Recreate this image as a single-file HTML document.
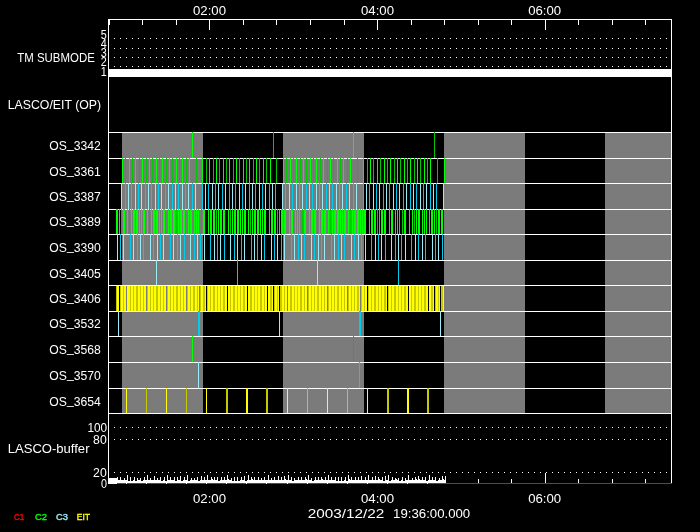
<!DOCTYPE html>
<html><head><meta charset="utf-8"><title>LASCO/EIT schedule</title>
<style>
html,body{margin:0;padding:0;background:#000;}
svg{display:block;}
text{font-family:"Liberation Sans",sans-serif;}
</style></head>
<body>
<svg width="700" height="532" viewBox="0 0 700 532" shape-rendering="crispEdges">
<rect x="0" y="0" width="700" height="532" fill="#000"/>
<rect x="122" y="132" width="81" height="281" fill="#7b7b7b"/>
<rect x="283" y="132" width="81" height="281" fill="#7b7b7b"/>
<rect x="444" y="132" width="81" height="281" fill="#7b7b7b"/>
<rect x="605" y="132" width="67" height="281" fill="#7b7b7b"/>
<rect x="108" y="132" width="564" height="1" fill="#fff"/>
<rect x="108" y="158" width="564" height="1" fill="#fff"/>
<rect x="108" y="183" width="564" height="1" fill="#fff"/>
<rect x="108" y="209" width="564" height="1" fill="#fff"/>
<rect x="108" y="234" width="564" height="1" fill="#fff"/>
<rect x="108" y="260" width="564" height="1" fill="#fff"/>
<rect x="108" y="285" width="564" height="1" fill="#fff"/>
<rect x="108" y="311" width="564" height="1" fill="#fff"/>
<rect x="108" y="336" width="564" height="1" fill="#fff"/>
<rect x="108" y="362" width="564" height="1" fill="#fff"/>
<rect x="108" y="388" width="564" height="1" fill="#fff"/>
<rect x="108" y="413" width="564" height="1" fill="#fff"/>
<rect x="114" y="38" width="1" height="1" fill="#fff"/>
<rect x="120" y="38" width="1" height="1" fill="#fff"/>
<rect x="126" y="38" width="1" height="1" fill="#fff"/>
<rect x="132" y="38" width="1" height="1" fill="#fff"/>
<rect x="138" y="38" width="1" height="1" fill="#fff"/>
<rect x="144" y="38" width="1" height="1" fill="#fff"/>
<rect x="150" y="38" width="1" height="1" fill="#fff"/>
<rect x="156" y="38" width="1" height="1" fill="#fff"/>
<rect x="162" y="38" width="1" height="1" fill="#fff"/>
<rect x="168" y="38" width="1" height="1" fill="#fff"/>
<rect x="174" y="38" width="1" height="1" fill="#fff"/>
<rect x="180" y="38" width="1" height="1" fill="#fff"/>
<rect x="186" y="38" width="1" height="1" fill="#fff"/>
<rect x="192" y="38" width="1" height="1" fill="#fff"/>
<rect x="198" y="38" width="1" height="1" fill="#fff"/>
<rect x="204" y="38" width="1" height="1" fill="#fff"/>
<rect x="210" y="38" width="1" height="1" fill="#fff"/>
<rect x="216" y="38" width="1" height="1" fill="#fff"/>
<rect x="222" y="38" width="1" height="1" fill="#fff"/>
<rect x="228" y="38" width="1" height="1" fill="#fff"/>
<rect x="234" y="38" width="1" height="1" fill="#fff"/>
<rect x="240" y="38" width="1" height="1" fill="#fff"/>
<rect x="246" y="38" width="1" height="1" fill="#fff"/>
<rect x="252" y="38" width="1" height="1" fill="#fff"/>
<rect x="258" y="38" width="1" height="1" fill="#fff"/>
<rect x="264" y="38" width="1" height="1" fill="#fff"/>
<rect x="270" y="38" width="1" height="1" fill="#fff"/>
<rect x="276" y="38" width="1" height="1" fill="#fff"/>
<rect x="282" y="38" width="1" height="1" fill="#fff"/>
<rect x="288" y="38" width="1" height="1" fill="#fff"/>
<rect x="294" y="38" width="1" height="1" fill="#fff"/>
<rect x="300" y="38" width="1" height="1" fill="#fff"/>
<rect x="306" y="38" width="1" height="1" fill="#fff"/>
<rect x="312" y="38" width="1" height="1" fill="#fff"/>
<rect x="318" y="38" width="1" height="1" fill="#fff"/>
<rect x="324" y="38" width="1" height="1" fill="#fff"/>
<rect x="330" y="38" width="1" height="1" fill="#fff"/>
<rect x="336" y="38" width="1" height="1" fill="#fff"/>
<rect x="342" y="38" width="1" height="1" fill="#fff"/>
<rect x="348" y="38" width="1" height="1" fill="#fff"/>
<rect x="354" y="38" width="1" height="1" fill="#fff"/>
<rect x="360" y="38" width="1" height="1" fill="#fff"/>
<rect x="366" y="38" width="1" height="1" fill="#fff"/>
<rect x="372" y="38" width="1" height="1" fill="#fff"/>
<rect x="378" y="38" width="1" height="1" fill="#fff"/>
<rect x="384" y="38" width="1" height="1" fill="#fff"/>
<rect x="390" y="38" width="1" height="1" fill="#fff"/>
<rect x="396" y="38" width="1" height="1" fill="#fff"/>
<rect x="402" y="38" width="1" height="1" fill="#fff"/>
<rect x="408" y="38" width="1" height="1" fill="#fff"/>
<rect x="414" y="38" width="1" height="1" fill="#fff"/>
<rect x="420" y="38" width="1" height="1" fill="#fff"/>
<rect x="426" y="38" width="1" height="1" fill="#fff"/>
<rect x="432" y="38" width="1" height="1" fill="#fff"/>
<rect x="438" y="38" width="1" height="1" fill="#fff"/>
<rect x="444" y="38" width="1" height="1" fill="#fff"/>
<rect x="450" y="38" width="1" height="1" fill="#fff"/>
<rect x="456" y="38" width="1" height="1" fill="#fff"/>
<rect x="462" y="38" width="1" height="1" fill="#fff"/>
<rect x="468" y="38" width="1" height="1" fill="#fff"/>
<rect x="474" y="38" width="1" height="1" fill="#fff"/>
<rect x="480" y="38" width="1" height="1" fill="#fff"/>
<rect x="486" y="38" width="1" height="1" fill="#fff"/>
<rect x="492" y="38" width="1" height="1" fill="#fff"/>
<rect x="498" y="38" width="1" height="1" fill="#fff"/>
<rect x="504" y="38" width="1" height="1" fill="#fff"/>
<rect x="510" y="38" width="1" height="1" fill="#fff"/>
<rect x="516" y="38" width="1" height="1" fill="#fff"/>
<rect x="522" y="38" width="1" height="1" fill="#fff"/>
<rect x="528" y="38" width="1" height="1" fill="#fff"/>
<rect x="534" y="38" width="1" height="1" fill="#fff"/>
<rect x="540" y="38" width="1" height="1" fill="#fff"/>
<rect x="546" y="38" width="1" height="1" fill="#fff"/>
<rect x="552" y="38" width="1" height="1" fill="#fff"/>
<rect x="558" y="38" width="1" height="1" fill="#fff"/>
<rect x="564" y="38" width="1" height="1" fill="#fff"/>
<rect x="570" y="38" width="1" height="1" fill="#fff"/>
<rect x="576" y="38" width="1" height="1" fill="#fff"/>
<rect x="582" y="38" width="1" height="1" fill="#fff"/>
<rect x="588" y="38" width="1" height="1" fill="#fff"/>
<rect x="594" y="38" width="1" height="1" fill="#fff"/>
<rect x="600" y="38" width="1" height="1" fill="#fff"/>
<rect x="606" y="38" width="1" height="1" fill="#fff"/>
<rect x="612" y="38" width="1" height="1" fill="#fff"/>
<rect x="618" y="38" width="1" height="1" fill="#fff"/>
<rect x="624" y="38" width="1" height="1" fill="#fff"/>
<rect x="630" y="38" width="1" height="1" fill="#fff"/>
<rect x="636" y="38" width="1" height="1" fill="#fff"/>
<rect x="642" y="38" width="1" height="1" fill="#fff"/>
<rect x="648" y="38" width="1" height="1" fill="#fff"/>
<rect x="654" y="38" width="1" height="1" fill="#fff"/>
<rect x="660" y="38" width="1" height="1" fill="#fff"/>
<rect x="666" y="38" width="1" height="1" fill="#fff"/>
<rect x="114" y="48" width="1" height="1" fill="#fff"/>
<rect x="120" y="48" width="1" height="1" fill="#fff"/>
<rect x="126" y="48" width="1" height="1" fill="#fff"/>
<rect x="132" y="48" width="1" height="1" fill="#fff"/>
<rect x="138" y="48" width="1" height="1" fill="#fff"/>
<rect x="144" y="48" width="1" height="1" fill="#fff"/>
<rect x="150" y="48" width="1" height="1" fill="#fff"/>
<rect x="156" y="48" width="1" height="1" fill="#fff"/>
<rect x="162" y="48" width="1" height="1" fill="#fff"/>
<rect x="168" y="48" width="1" height="1" fill="#fff"/>
<rect x="174" y="48" width="1" height="1" fill="#fff"/>
<rect x="180" y="48" width="1" height="1" fill="#fff"/>
<rect x="186" y="48" width="1" height="1" fill="#fff"/>
<rect x="192" y="48" width="1" height="1" fill="#fff"/>
<rect x="198" y="48" width="1" height="1" fill="#fff"/>
<rect x="204" y="48" width="1" height="1" fill="#fff"/>
<rect x="210" y="48" width="1" height="1" fill="#fff"/>
<rect x="216" y="48" width="1" height="1" fill="#fff"/>
<rect x="222" y="48" width="1" height="1" fill="#fff"/>
<rect x="228" y="48" width="1" height="1" fill="#fff"/>
<rect x="234" y="48" width="1" height="1" fill="#fff"/>
<rect x="240" y="48" width="1" height="1" fill="#fff"/>
<rect x="246" y="48" width="1" height="1" fill="#fff"/>
<rect x="252" y="48" width="1" height="1" fill="#fff"/>
<rect x="258" y="48" width="1" height="1" fill="#fff"/>
<rect x="264" y="48" width="1" height="1" fill="#fff"/>
<rect x="270" y="48" width="1" height="1" fill="#fff"/>
<rect x="276" y="48" width="1" height="1" fill="#fff"/>
<rect x="282" y="48" width="1" height="1" fill="#fff"/>
<rect x="288" y="48" width="1" height="1" fill="#fff"/>
<rect x="294" y="48" width="1" height="1" fill="#fff"/>
<rect x="300" y="48" width="1" height="1" fill="#fff"/>
<rect x="306" y="48" width="1" height="1" fill="#fff"/>
<rect x="312" y="48" width="1" height="1" fill="#fff"/>
<rect x="318" y="48" width="1" height="1" fill="#fff"/>
<rect x="324" y="48" width="1" height="1" fill="#fff"/>
<rect x="330" y="48" width="1" height="1" fill="#fff"/>
<rect x="336" y="48" width="1" height="1" fill="#fff"/>
<rect x="342" y="48" width="1" height="1" fill="#fff"/>
<rect x="348" y="48" width="1" height="1" fill="#fff"/>
<rect x="354" y="48" width="1" height="1" fill="#fff"/>
<rect x="360" y="48" width="1" height="1" fill="#fff"/>
<rect x="366" y="48" width="1" height="1" fill="#fff"/>
<rect x="372" y="48" width="1" height="1" fill="#fff"/>
<rect x="378" y="48" width="1" height="1" fill="#fff"/>
<rect x="384" y="48" width="1" height="1" fill="#fff"/>
<rect x="390" y="48" width="1" height="1" fill="#fff"/>
<rect x="396" y="48" width="1" height="1" fill="#fff"/>
<rect x="402" y="48" width="1" height="1" fill="#fff"/>
<rect x="408" y="48" width="1" height="1" fill="#fff"/>
<rect x="414" y="48" width="1" height="1" fill="#fff"/>
<rect x="420" y="48" width="1" height="1" fill="#fff"/>
<rect x="426" y="48" width="1" height="1" fill="#fff"/>
<rect x="432" y="48" width="1" height="1" fill="#fff"/>
<rect x="438" y="48" width="1" height="1" fill="#fff"/>
<rect x="444" y="48" width="1" height="1" fill="#fff"/>
<rect x="450" y="48" width="1" height="1" fill="#fff"/>
<rect x="456" y="48" width="1" height="1" fill="#fff"/>
<rect x="462" y="48" width="1" height="1" fill="#fff"/>
<rect x="468" y="48" width="1" height="1" fill="#fff"/>
<rect x="474" y="48" width="1" height="1" fill="#fff"/>
<rect x="480" y="48" width="1" height="1" fill="#fff"/>
<rect x="486" y="48" width="1" height="1" fill="#fff"/>
<rect x="492" y="48" width="1" height="1" fill="#fff"/>
<rect x="498" y="48" width="1" height="1" fill="#fff"/>
<rect x="504" y="48" width="1" height="1" fill="#fff"/>
<rect x="510" y="48" width="1" height="1" fill="#fff"/>
<rect x="516" y="48" width="1" height="1" fill="#fff"/>
<rect x="522" y="48" width="1" height="1" fill="#fff"/>
<rect x="528" y="48" width="1" height="1" fill="#fff"/>
<rect x="534" y="48" width="1" height="1" fill="#fff"/>
<rect x="540" y="48" width="1" height="1" fill="#fff"/>
<rect x="546" y="48" width="1" height="1" fill="#fff"/>
<rect x="552" y="48" width="1" height="1" fill="#fff"/>
<rect x="558" y="48" width="1" height="1" fill="#fff"/>
<rect x="564" y="48" width="1" height="1" fill="#fff"/>
<rect x="570" y="48" width="1" height="1" fill="#fff"/>
<rect x="576" y="48" width="1" height="1" fill="#fff"/>
<rect x="582" y="48" width="1" height="1" fill="#fff"/>
<rect x="588" y="48" width="1" height="1" fill="#fff"/>
<rect x="594" y="48" width="1" height="1" fill="#fff"/>
<rect x="600" y="48" width="1" height="1" fill="#fff"/>
<rect x="606" y="48" width="1" height="1" fill="#fff"/>
<rect x="612" y="48" width="1" height="1" fill="#fff"/>
<rect x="618" y="48" width="1" height="1" fill="#fff"/>
<rect x="624" y="48" width="1" height="1" fill="#fff"/>
<rect x="630" y="48" width="1" height="1" fill="#fff"/>
<rect x="636" y="48" width="1" height="1" fill="#fff"/>
<rect x="642" y="48" width="1" height="1" fill="#fff"/>
<rect x="648" y="48" width="1" height="1" fill="#fff"/>
<rect x="654" y="48" width="1" height="1" fill="#fff"/>
<rect x="660" y="48" width="1" height="1" fill="#fff"/>
<rect x="666" y="48" width="1" height="1" fill="#fff"/>
<rect x="114" y="57" width="1" height="1" fill="#fff"/>
<rect x="120" y="57" width="1" height="1" fill="#fff"/>
<rect x="126" y="57" width="1" height="1" fill="#fff"/>
<rect x="132" y="57" width="1" height="1" fill="#fff"/>
<rect x="138" y="57" width="1" height="1" fill="#fff"/>
<rect x="144" y="57" width="1" height="1" fill="#fff"/>
<rect x="150" y="57" width="1" height="1" fill="#fff"/>
<rect x="156" y="57" width="1" height="1" fill="#fff"/>
<rect x="162" y="57" width="1" height="1" fill="#fff"/>
<rect x="168" y="57" width="1" height="1" fill="#fff"/>
<rect x="174" y="57" width="1" height="1" fill="#fff"/>
<rect x="180" y="57" width="1" height="1" fill="#fff"/>
<rect x="186" y="57" width="1" height="1" fill="#fff"/>
<rect x="192" y="57" width="1" height="1" fill="#fff"/>
<rect x="198" y="57" width="1" height="1" fill="#fff"/>
<rect x="204" y="57" width="1" height="1" fill="#fff"/>
<rect x="210" y="57" width="1" height="1" fill="#fff"/>
<rect x="216" y="57" width="1" height="1" fill="#fff"/>
<rect x="222" y="57" width="1" height="1" fill="#fff"/>
<rect x="228" y="57" width="1" height="1" fill="#fff"/>
<rect x="234" y="57" width="1" height="1" fill="#fff"/>
<rect x="240" y="57" width="1" height="1" fill="#fff"/>
<rect x="246" y="57" width="1" height="1" fill="#fff"/>
<rect x="252" y="57" width="1" height="1" fill="#fff"/>
<rect x="258" y="57" width="1" height="1" fill="#fff"/>
<rect x="264" y="57" width="1" height="1" fill="#fff"/>
<rect x="270" y="57" width="1" height="1" fill="#fff"/>
<rect x="276" y="57" width="1" height="1" fill="#fff"/>
<rect x="282" y="57" width="1" height="1" fill="#fff"/>
<rect x="288" y="57" width="1" height="1" fill="#fff"/>
<rect x="294" y="57" width="1" height="1" fill="#fff"/>
<rect x="300" y="57" width="1" height="1" fill="#fff"/>
<rect x="306" y="57" width="1" height="1" fill="#fff"/>
<rect x="312" y="57" width="1" height="1" fill="#fff"/>
<rect x="318" y="57" width="1" height="1" fill="#fff"/>
<rect x="324" y="57" width="1" height="1" fill="#fff"/>
<rect x="330" y="57" width="1" height="1" fill="#fff"/>
<rect x="336" y="57" width="1" height="1" fill="#fff"/>
<rect x="342" y="57" width="1" height="1" fill="#fff"/>
<rect x="348" y="57" width="1" height="1" fill="#fff"/>
<rect x="354" y="57" width="1" height="1" fill="#fff"/>
<rect x="360" y="57" width="1" height="1" fill="#fff"/>
<rect x="366" y="57" width="1" height="1" fill="#fff"/>
<rect x="372" y="57" width="1" height="1" fill="#fff"/>
<rect x="378" y="57" width="1" height="1" fill="#fff"/>
<rect x="384" y="57" width="1" height="1" fill="#fff"/>
<rect x="390" y="57" width="1" height="1" fill="#fff"/>
<rect x="396" y="57" width="1" height="1" fill="#fff"/>
<rect x="402" y="57" width="1" height="1" fill="#fff"/>
<rect x="408" y="57" width="1" height="1" fill="#fff"/>
<rect x="414" y="57" width="1" height="1" fill="#fff"/>
<rect x="420" y="57" width="1" height="1" fill="#fff"/>
<rect x="426" y="57" width="1" height="1" fill="#fff"/>
<rect x="432" y="57" width="1" height="1" fill="#fff"/>
<rect x="438" y="57" width="1" height="1" fill="#fff"/>
<rect x="444" y="57" width="1" height="1" fill="#fff"/>
<rect x="450" y="57" width="1" height="1" fill="#fff"/>
<rect x="456" y="57" width="1" height="1" fill="#fff"/>
<rect x="462" y="57" width="1" height="1" fill="#fff"/>
<rect x="468" y="57" width="1" height="1" fill="#fff"/>
<rect x="474" y="57" width="1" height="1" fill="#fff"/>
<rect x="480" y="57" width="1" height="1" fill="#fff"/>
<rect x="486" y="57" width="1" height="1" fill="#fff"/>
<rect x="492" y="57" width="1" height="1" fill="#fff"/>
<rect x="498" y="57" width="1" height="1" fill="#fff"/>
<rect x="504" y="57" width="1" height="1" fill="#fff"/>
<rect x="510" y="57" width="1" height="1" fill="#fff"/>
<rect x="516" y="57" width="1" height="1" fill="#fff"/>
<rect x="522" y="57" width="1" height="1" fill="#fff"/>
<rect x="528" y="57" width="1" height="1" fill="#fff"/>
<rect x="534" y="57" width="1" height="1" fill="#fff"/>
<rect x="540" y="57" width="1" height="1" fill="#fff"/>
<rect x="546" y="57" width="1" height="1" fill="#fff"/>
<rect x="552" y="57" width="1" height="1" fill="#fff"/>
<rect x="558" y="57" width="1" height="1" fill="#fff"/>
<rect x="564" y="57" width="1" height="1" fill="#fff"/>
<rect x="570" y="57" width="1" height="1" fill="#fff"/>
<rect x="576" y="57" width="1" height="1" fill="#fff"/>
<rect x="582" y="57" width="1" height="1" fill="#fff"/>
<rect x="588" y="57" width="1" height="1" fill="#fff"/>
<rect x="594" y="57" width="1" height="1" fill="#fff"/>
<rect x="600" y="57" width="1" height="1" fill="#fff"/>
<rect x="606" y="57" width="1" height="1" fill="#fff"/>
<rect x="612" y="57" width="1" height="1" fill="#fff"/>
<rect x="618" y="57" width="1" height="1" fill="#fff"/>
<rect x="624" y="57" width="1" height="1" fill="#fff"/>
<rect x="630" y="57" width="1" height="1" fill="#fff"/>
<rect x="636" y="57" width="1" height="1" fill="#fff"/>
<rect x="642" y="57" width="1" height="1" fill="#fff"/>
<rect x="648" y="57" width="1" height="1" fill="#fff"/>
<rect x="654" y="57" width="1" height="1" fill="#fff"/>
<rect x="660" y="57" width="1" height="1" fill="#fff"/>
<rect x="666" y="57" width="1" height="1" fill="#fff"/>
<rect x="114" y="66" width="1" height="1" fill="#fff"/>
<rect x="120" y="66" width="1" height="1" fill="#fff"/>
<rect x="126" y="66" width="1" height="1" fill="#fff"/>
<rect x="132" y="66" width="1" height="1" fill="#fff"/>
<rect x="138" y="66" width="1" height="1" fill="#fff"/>
<rect x="144" y="66" width="1" height="1" fill="#fff"/>
<rect x="150" y="66" width="1" height="1" fill="#fff"/>
<rect x="156" y="66" width="1" height="1" fill="#fff"/>
<rect x="162" y="66" width="1" height="1" fill="#fff"/>
<rect x="168" y="66" width="1" height="1" fill="#fff"/>
<rect x="174" y="66" width="1" height="1" fill="#fff"/>
<rect x="180" y="66" width="1" height="1" fill="#fff"/>
<rect x="186" y="66" width="1" height="1" fill="#fff"/>
<rect x="192" y="66" width="1" height="1" fill="#fff"/>
<rect x="198" y="66" width="1" height="1" fill="#fff"/>
<rect x="204" y="66" width="1" height="1" fill="#fff"/>
<rect x="210" y="66" width="1" height="1" fill="#fff"/>
<rect x="216" y="66" width="1" height="1" fill="#fff"/>
<rect x="222" y="66" width="1" height="1" fill="#fff"/>
<rect x="228" y="66" width="1" height="1" fill="#fff"/>
<rect x="234" y="66" width="1" height="1" fill="#fff"/>
<rect x="240" y="66" width="1" height="1" fill="#fff"/>
<rect x="246" y="66" width="1" height="1" fill="#fff"/>
<rect x="252" y="66" width="1" height="1" fill="#fff"/>
<rect x="258" y="66" width="1" height="1" fill="#fff"/>
<rect x="264" y="66" width="1" height="1" fill="#fff"/>
<rect x="270" y="66" width="1" height="1" fill="#fff"/>
<rect x="276" y="66" width="1" height="1" fill="#fff"/>
<rect x="282" y="66" width="1" height="1" fill="#fff"/>
<rect x="288" y="66" width="1" height="1" fill="#fff"/>
<rect x="294" y="66" width="1" height="1" fill="#fff"/>
<rect x="300" y="66" width="1" height="1" fill="#fff"/>
<rect x="306" y="66" width="1" height="1" fill="#fff"/>
<rect x="312" y="66" width="1" height="1" fill="#fff"/>
<rect x="318" y="66" width="1" height="1" fill="#fff"/>
<rect x="324" y="66" width="1" height="1" fill="#fff"/>
<rect x="330" y="66" width="1" height="1" fill="#fff"/>
<rect x="336" y="66" width="1" height="1" fill="#fff"/>
<rect x="342" y="66" width="1" height="1" fill="#fff"/>
<rect x="348" y="66" width="1" height="1" fill="#fff"/>
<rect x="354" y="66" width="1" height="1" fill="#fff"/>
<rect x="360" y="66" width="1" height="1" fill="#fff"/>
<rect x="366" y="66" width="1" height="1" fill="#fff"/>
<rect x="372" y="66" width="1" height="1" fill="#fff"/>
<rect x="378" y="66" width="1" height="1" fill="#fff"/>
<rect x="384" y="66" width="1" height="1" fill="#fff"/>
<rect x="390" y="66" width="1" height="1" fill="#fff"/>
<rect x="396" y="66" width="1" height="1" fill="#fff"/>
<rect x="402" y="66" width="1" height="1" fill="#fff"/>
<rect x="408" y="66" width="1" height="1" fill="#fff"/>
<rect x="414" y="66" width="1" height="1" fill="#fff"/>
<rect x="420" y="66" width="1" height="1" fill="#fff"/>
<rect x="426" y="66" width="1" height="1" fill="#fff"/>
<rect x="432" y="66" width="1" height="1" fill="#fff"/>
<rect x="438" y="66" width="1" height="1" fill="#fff"/>
<rect x="444" y="66" width="1" height="1" fill="#fff"/>
<rect x="450" y="66" width="1" height="1" fill="#fff"/>
<rect x="456" y="66" width="1" height="1" fill="#fff"/>
<rect x="462" y="66" width="1" height="1" fill="#fff"/>
<rect x="468" y="66" width="1" height="1" fill="#fff"/>
<rect x="474" y="66" width="1" height="1" fill="#fff"/>
<rect x="480" y="66" width="1" height="1" fill="#fff"/>
<rect x="486" y="66" width="1" height="1" fill="#fff"/>
<rect x="492" y="66" width="1" height="1" fill="#fff"/>
<rect x="498" y="66" width="1" height="1" fill="#fff"/>
<rect x="504" y="66" width="1" height="1" fill="#fff"/>
<rect x="510" y="66" width="1" height="1" fill="#fff"/>
<rect x="516" y="66" width="1" height="1" fill="#fff"/>
<rect x="522" y="66" width="1" height="1" fill="#fff"/>
<rect x="528" y="66" width="1" height="1" fill="#fff"/>
<rect x="534" y="66" width="1" height="1" fill="#fff"/>
<rect x="540" y="66" width="1" height="1" fill="#fff"/>
<rect x="546" y="66" width="1" height="1" fill="#fff"/>
<rect x="552" y="66" width="1" height="1" fill="#fff"/>
<rect x="558" y="66" width="1" height="1" fill="#fff"/>
<rect x="564" y="66" width="1" height="1" fill="#fff"/>
<rect x="570" y="66" width="1" height="1" fill="#fff"/>
<rect x="576" y="66" width="1" height="1" fill="#fff"/>
<rect x="582" y="66" width="1" height="1" fill="#fff"/>
<rect x="588" y="66" width="1" height="1" fill="#fff"/>
<rect x="594" y="66" width="1" height="1" fill="#fff"/>
<rect x="600" y="66" width="1" height="1" fill="#fff"/>
<rect x="606" y="66" width="1" height="1" fill="#fff"/>
<rect x="612" y="66" width="1" height="1" fill="#fff"/>
<rect x="618" y="66" width="1" height="1" fill="#fff"/>
<rect x="624" y="66" width="1" height="1" fill="#fff"/>
<rect x="630" y="66" width="1" height="1" fill="#fff"/>
<rect x="636" y="66" width="1" height="1" fill="#fff"/>
<rect x="642" y="66" width="1" height="1" fill="#fff"/>
<rect x="648" y="66" width="1" height="1" fill="#fff"/>
<rect x="654" y="66" width="1" height="1" fill="#fff"/>
<rect x="660" y="66" width="1" height="1" fill="#fff"/>
<rect x="666" y="66" width="1" height="1" fill="#fff"/>
<rect x="114" y="427" width="1" height="1" fill="#fff"/>
<rect x="120" y="427" width="1" height="1" fill="#fff"/>
<rect x="126" y="427" width="1" height="1" fill="#fff"/>
<rect x="132" y="427" width="1" height="1" fill="#fff"/>
<rect x="138" y="427" width="1" height="1" fill="#fff"/>
<rect x="144" y="427" width="1" height="1" fill="#fff"/>
<rect x="150" y="427" width="1" height="1" fill="#fff"/>
<rect x="156" y="427" width="1" height="1" fill="#fff"/>
<rect x="162" y="427" width="1" height="1" fill="#fff"/>
<rect x="168" y="427" width="1" height="1" fill="#fff"/>
<rect x="174" y="427" width="1" height="1" fill="#fff"/>
<rect x="180" y="427" width="1" height="1" fill="#fff"/>
<rect x="186" y="427" width="1" height="1" fill="#fff"/>
<rect x="192" y="427" width="1" height="1" fill="#fff"/>
<rect x="198" y="427" width="1" height="1" fill="#fff"/>
<rect x="204" y="427" width="1" height="1" fill="#fff"/>
<rect x="210" y="427" width="1" height="1" fill="#fff"/>
<rect x="216" y="427" width="1" height="1" fill="#fff"/>
<rect x="222" y="427" width="1" height="1" fill="#fff"/>
<rect x="228" y="427" width="1" height="1" fill="#fff"/>
<rect x="234" y="427" width="1" height="1" fill="#fff"/>
<rect x="240" y="427" width="1" height="1" fill="#fff"/>
<rect x="246" y="427" width="1" height="1" fill="#fff"/>
<rect x="252" y="427" width="1" height="1" fill="#fff"/>
<rect x="258" y="427" width="1" height="1" fill="#fff"/>
<rect x="264" y="427" width="1" height="1" fill="#fff"/>
<rect x="270" y="427" width="1" height="1" fill="#fff"/>
<rect x="276" y="427" width="1" height="1" fill="#fff"/>
<rect x="282" y="427" width="1" height="1" fill="#fff"/>
<rect x="288" y="427" width="1" height="1" fill="#fff"/>
<rect x="294" y="427" width="1" height="1" fill="#fff"/>
<rect x="300" y="427" width="1" height="1" fill="#fff"/>
<rect x="306" y="427" width="1" height="1" fill="#fff"/>
<rect x="312" y="427" width="1" height="1" fill="#fff"/>
<rect x="318" y="427" width="1" height="1" fill="#fff"/>
<rect x="324" y="427" width="1" height="1" fill="#fff"/>
<rect x="330" y="427" width="1" height="1" fill="#fff"/>
<rect x="336" y="427" width="1" height="1" fill="#fff"/>
<rect x="342" y="427" width="1" height="1" fill="#fff"/>
<rect x="348" y="427" width="1" height="1" fill="#fff"/>
<rect x="354" y="427" width="1" height="1" fill="#fff"/>
<rect x="360" y="427" width="1" height="1" fill="#fff"/>
<rect x="366" y="427" width="1" height="1" fill="#fff"/>
<rect x="372" y="427" width="1" height="1" fill="#fff"/>
<rect x="378" y="427" width="1" height="1" fill="#fff"/>
<rect x="384" y="427" width="1" height="1" fill="#fff"/>
<rect x="390" y="427" width="1" height="1" fill="#fff"/>
<rect x="396" y="427" width="1" height="1" fill="#fff"/>
<rect x="402" y="427" width="1" height="1" fill="#fff"/>
<rect x="408" y="427" width="1" height="1" fill="#fff"/>
<rect x="414" y="427" width="1" height="1" fill="#fff"/>
<rect x="420" y="427" width="1" height="1" fill="#fff"/>
<rect x="426" y="427" width="1" height="1" fill="#fff"/>
<rect x="432" y="427" width="1" height="1" fill="#fff"/>
<rect x="438" y="427" width="1" height="1" fill="#fff"/>
<rect x="444" y="427" width="1" height="1" fill="#fff"/>
<rect x="450" y="427" width="1" height="1" fill="#fff"/>
<rect x="456" y="427" width="1" height="1" fill="#fff"/>
<rect x="462" y="427" width="1" height="1" fill="#fff"/>
<rect x="468" y="427" width="1" height="1" fill="#fff"/>
<rect x="474" y="427" width="1" height="1" fill="#fff"/>
<rect x="480" y="427" width="1" height="1" fill="#fff"/>
<rect x="486" y="427" width="1" height="1" fill="#fff"/>
<rect x="492" y="427" width="1" height="1" fill="#fff"/>
<rect x="498" y="427" width="1" height="1" fill="#fff"/>
<rect x="504" y="427" width="1" height="1" fill="#fff"/>
<rect x="510" y="427" width="1" height="1" fill="#fff"/>
<rect x="516" y="427" width="1" height="1" fill="#fff"/>
<rect x="522" y="427" width="1" height="1" fill="#fff"/>
<rect x="528" y="427" width="1" height="1" fill="#fff"/>
<rect x="534" y="427" width="1" height="1" fill="#fff"/>
<rect x="540" y="427" width="1" height="1" fill="#fff"/>
<rect x="546" y="427" width="1" height="1" fill="#fff"/>
<rect x="552" y="427" width="1" height="1" fill="#fff"/>
<rect x="558" y="427" width="1" height="1" fill="#fff"/>
<rect x="564" y="427" width="1" height="1" fill="#fff"/>
<rect x="570" y="427" width="1" height="1" fill="#fff"/>
<rect x="576" y="427" width="1" height="1" fill="#fff"/>
<rect x="582" y="427" width="1" height="1" fill="#fff"/>
<rect x="588" y="427" width="1" height="1" fill="#fff"/>
<rect x="594" y="427" width="1" height="1" fill="#fff"/>
<rect x="600" y="427" width="1" height="1" fill="#fff"/>
<rect x="606" y="427" width="1" height="1" fill="#fff"/>
<rect x="612" y="427" width="1" height="1" fill="#fff"/>
<rect x="618" y="427" width="1" height="1" fill="#fff"/>
<rect x="624" y="427" width="1" height="1" fill="#fff"/>
<rect x="630" y="427" width="1" height="1" fill="#fff"/>
<rect x="636" y="427" width="1" height="1" fill="#fff"/>
<rect x="642" y="427" width="1" height="1" fill="#fff"/>
<rect x="648" y="427" width="1" height="1" fill="#fff"/>
<rect x="654" y="427" width="1" height="1" fill="#fff"/>
<rect x="660" y="427" width="1" height="1" fill="#fff"/>
<rect x="666" y="427" width="1" height="1" fill="#fff"/>
<rect x="114" y="439" width="1" height="1" fill="#fff"/>
<rect x="120" y="439" width="1" height="1" fill="#fff"/>
<rect x="126" y="439" width="1" height="1" fill="#fff"/>
<rect x="132" y="439" width="1" height="1" fill="#fff"/>
<rect x="138" y="439" width="1" height="1" fill="#fff"/>
<rect x="144" y="439" width="1" height="1" fill="#fff"/>
<rect x="150" y="439" width="1" height="1" fill="#fff"/>
<rect x="156" y="439" width="1" height="1" fill="#fff"/>
<rect x="162" y="439" width="1" height="1" fill="#fff"/>
<rect x="168" y="439" width="1" height="1" fill="#fff"/>
<rect x="174" y="439" width="1" height="1" fill="#fff"/>
<rect x="180" y="439" width="1" height="1" fill="#fff"/>
<rect x="186" y="439" width="1" height="1" fill="#fff"/>
<rect x="192" y="439" width="1" height="1" fill="#fff"/>
<rect x="198" y="439" width="1" height="1" fill="#fff"/>
<rect x="204" y="439" width="1" height="1" fill="#fff"/>
<rect x="210" y="439" width="1" height="1" fill="#fff"/>
<rect x="216" y="439" width="1" height="1" fill="#fff"/>
<rect x="222" y="439" width="1" height="1" fill="#fff"/>
<rect x="228" y="439" width="1" height="1" fill="#fff"/>
<rect x="234" y="439" width="1" height="1" fill="#fff"/>
<rect x="240" y="439" width="1" height="1" fill="#fff"/>
<rect x="246" y="439" width="1" height="1" fill="#fff"/>
<rect x="252" y="439" width="1" height="1" fill="#fff"/>
<rect x="258" y="439" width="1" height="1" fill="#fff"/>
<rect x="264" y="439" width="1" height="1" fill="#fff"/>
<rect x="270" y="439" width="1" height="1" fill="#fff"/>
<rect x="276" y="439" width="1" height="1" fill="#fff"/>
<rect x="282" y="439" width="1" height="1" fill="#fff"/>
<rect x="288" y="439" width="1" height="1" fill="#fff"/>
<rect x="294" y="439" width="1" height="1" fill="#fff"/>
<rect x="300" y="439" width="1" height="1" fill="#fff"/>
<rect x="306" y="439" width="1" height="1" fill="#fff"/>
<rect x="312" y="439" width="1" height="1" fill="#fff"/>
<rect x="318" y="439" width="1" height="1" fill="#fff"/>
<rect x="324" y="439" width="1" height="1" fill="#fff"/>
<rect x="330" y="439" width="1" height="1" fill="#fff"/>
<rect x="336" y="439" width="1" height="1" fill="#fff"/>
<rect x="342" y="439" width="1" height="1" fill="#fff"/>
<rect x="348" y="439" width="1" height="1" fill="#fff"/>
<rect x="354" y="439" width="1" height="1" fill="#fff"/>
<rect x="360" y="439" width="1" height="1" fill="#fff"/>
<rect x="366" y="439" width="1" height="1" fill="#fff"/>
<rect x="372" y="439" width="1" height="1" fill="#fff"/>
<rect x="378" y="439" width="1" height="1" fill="#fff"/>
<rect x="384" y="439" width="1" height="1" fill="#fff"/>
<rect x="390" y="439" width="1" height="1" fill="#fff"/>
<rect x="396" y="439" width="1" height="1" fill="#fff"/>
<rect x="402" y="439" width="1" height="1" fill="#fff"/>
<rect x="408" y="439" width="1" height="1" fill="#fff"/>
<rect x="414" y="439" width="1" height="1" fill="#fff"/>
<rect x="420" y="439" width="1" height="1" fill="#fff"/>
<rect x="426" y="439" width="1" height="1" fill="#fff"/>
<rect x="432" y="439" width="1" height="1" fill="#fff"/>
<rect x="438" y="439" width="1" height="1" fill="#fff"/>
<rect x="444" y="439" width="1" height="1" fill="#fff"/>
<rect x="450" y="439" width="1" height="1" fill="#fff"/>
<rect x="456" y="439" width="1" height="1" fill="#fff"/>
<rect x="462" y="439" width="1" height="1" fill="#fff"/>
<rect x="468" y="439" width="1" height="1" fill="#fff"/>
<rect x="474" y="439" width="1" height="1" fill="#fff"/>
<rect x="480" y="439" width="1" height="1" fill="#fff"/>
<rect x="486" y="439" width="1" height="1" fill="#fff"/>
<rect x="492" y="439" width="1" height="1" fill="#fff"/>
<rect x="498" y="439" width="1" height="1" fill="#fff"/>
<rect x="504" y="439" width="1" height="1" fill="#fff"/>
<rect x="510" y="439" width="1" height="1" fill="#fff"/>
<rect x="516" y="439" width="1" height="1" fill="#fff"/>
<rect x="522" y="439" width="1" height="1" fill="#fff"/>
<rect x="528" y="439" width="1" height="1" fill="#fff"/>
<rect x="534" y="439" width="1" height="1" fill="#fff"/>
<rect x="540" y="439" width="1" height="1" fill="#fff"/>
<rect x="546" y="439" width="1" height="1" fill="#fff"/>
<rect x="552" y="439" width="1" height="1" fill="#fff"/>
<rect x="558" y="439" width="1" height="1" fill="#fff"/>
<rect x="564" y="439" width="1" height="1" fill="#fff"/>
<rect x="570" y="439" width="1" height="1" fill="#fff"/>
<rect x="576" y="439" width="1" height="1" fill="#fff"/>
<rect x="582" y="439" width="1" height="1" fill="#fff"/>
<rect x="588" y="439" width="1" height="1" fill="#fff"/>
<rect x="594" y="439" width="1" height="1" fill="#fff"/>
<rect x="600" y="439" width="1" height="1" fill="#fff"/>
<rect x="606" y="439" width="1" height="1" fill="#fff"/>
<rect x="612" y="439" width="1" height="1" fill="#fff"/>
<rect x="618" y="439" width="1" height="1" fill="#fff"/>
<rect x="624" y="439" width="1" height="1" fill="#fff"/>
<rect x="630" y="439" width="1" height="1" fill="#fff"/>
<rect x="636" y="439" width="1" height="1" fill="#fff"/>
<rect x="642" y="439" width="1" height="1" fill="#fff"/>
<rect x="648" y="439" width="1" height="1" fill="#fff"/>
<rect x="654" y="439" width="1" height="1" fill="#fff"/>
<rect x="660" y="439" width="1" height="1" fill="#fff"/>
<rect x="666" y="439" width="1" height="1" fill="#fff"/>
<rect x="114" y="472" width="1" height="1" fill="#fff"/>
<rect x="120" y="472" width="1" height="1" fill="#fff"/>
<rect x="126" y="472" width="1" height="1" fill="#fff"/>
<rect x="132" y="472" width="1" height="1" fill="#fff"/>
<rect x="138" y="472" width="1" height="1" fill="#fff"/>
<rect x="144" y="472" width="1" height="1" fill="#fff"/>
<rect x="150" y="472" width="1" height="1" fill="#fff"/>
<rect x="156" y="472" width="1" height="1" fill="#fff"/>
<rect x="162" y="472" width="1" height="1" fill="#fff"/>
<rect x="168" y="472" width="1" height="1" fill="#fff"/>
<rect x="174" y="472" width="1" height="1" fill="#fff"/>
<rect x="180" y="472" width="1" height="1" fill="#fff"/>
<rect x="186" y="472" width="1" height="1" fill="#fff"/>
<rect x="192" y="472" width="1" height="1" fill="#fff"/>
<rect x="198" y="472" width="1" height="1" fill="#fff"/>
<rect x="204" y="472" width="1" height="1" fill="#fff"/>
<rect x="210" y="472" width="1" height="1" fill="#fff"/>
<rect x="216" y="472" width="1" height="1" fill="#fff"/>
<rect x="222" y="472" width="1" height="1" fill="#fff"/>
<rect x="228" y="472" width="1" height="1" fill="#fff"/>
<rect x="234" y="472" width="1" height="1" fill="#fff"/>
<rect x="240" y="472" width="1" height="1" fill="#fff"/>
<rect x="246" y="472" width="1" height="1" fill="#fff"/>
<rect x="252" y="472" width="1" height="1" fill="#fff"/>
<rect x="258" y="472" width="1" height="1" fill="#fff"/>
<rect x="264" y="472" width="1" height="1" fill="#fff"/>
<rect x="270" y="472" width="1" height="1" fill="#fff"/>
<rect x="276" y="472" width="1" height="1" fill="#fff"/>
<rect x="282" y="472" width="1" height="1" fill="#fff"/>
<rect x="288" y="472" width="1" height="1" fill="#fff"/>
<rect x="294" y="472" width="1" height="1" fill="#fff"/>
<rect x="300" y="472" width="1" height="1" fill="#fff"/>
<rect x="306" y="472" width="1" height="1" fill="#fff"/>
<rect x="312" y="472" width="1" height="1" fill="#fff"/>
<rect x="318" y="472" width="1" height="1" fill="#fff"/>
<rect x="324" y="472" width="1" height="1" fill="#fff"/>
<rect x="330" y="472" width="1" height="1" fill="#fff"/>
<rect x="336" y="472" width="1" height="1" fill="#fff"/>
<rect x="342" y="472" width="1" height="1" fill="#fff"/>
<rect x="348" y="472" width="1" height="1" fill="#fff"/>
<rect x="354" y="472" width="1" height="1" fill="#fff"/>
<rect x="360" y="472" width="1" height="1" fill="#fff"/>
<rect x="366" y="472" width="1" height="1" fill="#fff"/>
<rect x="372" y="472" width="1" height="1" fill="#fff"/>
<rect x="378" y="472" width="1" height="1" fill="#fff"/>
<rect x="384" y="472" width="1" height="1" fill="#fff"/>
<rect x="390" y="472" width="1" height="1" fill="#fff"/>
<rect x="396" y="472" width="1" height="1" fill="#fff"/>
<rect x="402" y="472" width="1" height="1" fill="#fff"/>
<rect x="408" y="472" width="1" height="1" fill="#fff"/>
<rect x="414" y="472" width="1" height="1" fill="#fff"/>
<rect x="420" y="472" width="1" height="1" fill="#fff"/>
<rect x="426" y="472" width="1" height="1" fill="#fff"/>
<rect x="432" y="472" width="1" height="1" fill="#fff"/>
<rect x="438" y="472" width="1" height="1" fill="#fff"/>
<rect x="444" y="472" width="1" height="1" fill="#fff"/>
<rect x="450" y="472" width="1" height="1" fill="#fff"/>
<rect x="456" y="472" width="1" height="1" fill="#fff"/>
<rect x="462" y="472" width="1" height="1" fill="#fff"/>
<rect x="468" y="472" width="1" height="1" fill="#fff"/>
<rect x="474" y="472" width="1" height="1" fill="#fff"/>
<rect x="480" y="472" width="1" height="1" fill="#fff"/>
<rect x="486" y="472" width="1" height="1" fill="#fff"/>
<rect x="492" y="472" width="1" height="1" fill="#fff"/>
<rect x="498" y="472" width="1" height="1" fill="#fff"/>
<rect x="504" y="472" width="1" height="1" fill="#fff"/>
<rect x="510" y="472" width="1" height="1" fill="#fff"/>
<rect x="516" y="472" width="1" height="1" fill="#fff"/>
<rect x="522" y="472" width="1" height="1" fill="#fff"/>
<rect x="528" y="472" width="1" height="1" fill="#fff"/>
<rect x="534" y="472" width="1" height="1" fill="#fff"/>
<rect x="540" y="472" width="1" height="1" fill="#fff"/>
<rect x="546" y="472" width="1" height="1" fill="#fff"/>
<rect x="552" y="472" width="1" height="1" fill="#fff"/>
<rect x="558" y="472" width="1" height="1" fill="#fff"/>
<rect x="564" y="472" width="1" height="1" fill="#fff"/>
<rect x="570" y="472" width="1" height="1" fill="#fff"/>
<rect x="576" y="472" width="1" height="1" fill="#fff"/>
<rect x="582" y="472" width="1" height="1" fill="#fff"/>
<rect x="588" y="472" width="1" height="1" fill="#fff"/>
<rect x="594" y="472" width="1" height="1" fill="#fff"/>
<rect x="600" y="472" width="1" height="1" fill="#fff"/>
<rect x="606" y="472" width="1" height="1" fill="#fff"/>
<rect x="612" y="472" width="1" height="1" fill="#fff"/>
<rect x="618" y="472" width="1" height="1" fill="#fff"/>
<rect x="624" y="472" width="1" height="1" fill="#fff"/>
<rect x="630" y="472" width="1" height="1" fill="#fff"/>
<rect x="636" y="472" width="1" height="1" fill="#fff"/>
<rect x="642" y="472" width="1" height="1" fill="#fff"/>
<rect x="648" y="472" width="1" height="1" fill="#fff"/>
<rect x="654" y="472" width="1" height="1" fill="#fff"/>
<rect x="660" y="472" width="1" height="1" fill="#fff"/>
<rect x="666" y="472" width="1" height="1" fill="#fff"/>
<rect x="108" y="69" width="564" height="8" fill="#fff"/>
<rect x="192" y="132" width="1" height="26" fill="#00ff00"/>
<rect x="273" y="132" width="1" height="26" fill="#00c800"/>
<rect x="353" y="132" width="1" height="26" fill="#00ff00"/>
<rect x="434" y="132" width="1" height="26" fill="#00c800"/>
<rect x="122" y="158" width="1" height="25" fill="#00ff00"/>
<rect x="125" y="158" width="1" height="25" fill="#00c800"/>
<rect x="129" y="158" width="1" height="25" fill="#00ff00"/>
<rect x="132" y="158" width="1" height="25" fill="#00c800"/>
<rect x="135" y="158" width="1" height="25" fill="#00ff00"/>
<rect x="139" y="158" width="1" height="25" fill="#00c800"/>
<rect x="142" y="158" width="1" height="25" fill="#00ff00"/>
<rect x="146" y="158" width="1" height="25" fill="#00c800"/>
<rect x="149" y="158" width="1" height="25" fill="#00ff00"/>
<rect x="152" y="158" width="1" height="25" fill="#00c800"/>
<rect x="156" y="158" width="1" height="25" fill="#00ff00"/>
<rect x="159" y="158" width="1" height="25" fill="#00c800"/>
<rect x="162" y="158" width="1" height="25" fill="#00ff00"/>
<rect x="166" y="158" width="1" height="25" fill="#00c800"/>
<rect x="169" y="158" width="1" height="25" fill="#00ff00"/>
<rect x="172" y="158" width="1" height="25" fill="#00c800"/>
<rect x="176" y="158" width="1" height="25" fill="#00ff00"/>
<rect x="179" y="158" width="1" height="25" fill="#00c800"/>
<rect x="182" y="158" width="1" height="25" fill="#00ff00"/>
<rect x="186" y="158" width="1" height="25" fill="#00c800"/>
<rect x="189" y="158" width="1" height="25" fill="#00ff00"/>
<rect x="196" y="158" width="1" height="25" fill="#00c800"/>
<rect x="202" y="158" width="1" height="25" fill="#00ff00"/>
<rect x="206" y="158" width="1" height="25" fill="#00c800"/>
<rect x="209" y="158" width="1" height="25" fill="#00ff00"/>
<rect x="213" y="158" width="1" height="25" fill="#00c800"/>
<rect x="216" y="158" width="1" height="25" fill="#00ff00"/>
<rect x="219" y="158" width="1" height="25" fill="#00c800"/>
<rect x="223" y="158" width="1" height="25" fill="#00ff00"/>
<rect x="226" y="158" width="1" height="25" fill="#00c800"/>
<rect x="229" y="158" width="1" height="25" fill="#00ff00"/>
<rect x="233" y="158" width="1" height="25" fill="#00c800"/>
<rect x="236" y="158" width="1" height="25" fill="#00ff00"/>
<rect x="239" y="158" width="1" height="25" fill="#00c800"/>
<rect x="243" y="158" width="1" height="25" fill="#00ff00"/>
<rect x="246" y="158" width="1" height="25" fill="#00c800"/>
<rect x="249" y="158" width="1" height="25" fill="#00ff00"/>
<rect x="253" y="158" width="1" height="25" fill="#00c800"/>
<rect x="256" y="158" width="1" height="25" fill="#00ff00"/>
<rect x="259" y="158" width="1" height="25" fill="#00c800"/>
<rect x="263" y="158" width="1" height="25" fill="#00ff00"/>
<rect x="266" y="158" width="1" height="25" fill="#00c800"/>
<rect x="270" y="158" width="1" height="25" fill="#00ff00"/>
<rect x="276" y="158" width="1" height="25" fill="#00c800"/>
<rect x="283" y="158" width="1" height="25" fill="#00ff00"/>
<rect x="286" y="158" width="1" height="25" fill="#00c800"/>
<rect x="290" y="158" width="1" height="25" fill="#00ff00"/>
<rect x="293" y="158" width="1" height="25" fill="#00c800"/>
<rect x="296" y="158" width="1" height="25" fill="#00ff00"/>
<rect x="300" y="158" width="1" height="25" fill="#00c800"/>
<rect x="303" y="158" width="1" height="25" fill="#00ff00"/>
<rect x="306" y="158" width="1" height="25" fill="#00c800"/>
<rect x="310" y="158" width="1" height="25" fill="#00ff00"/>
<rect x="313" y="158" width="1" height="25" fill="#00c800"/>
<rect x="316" y="158" width="1" height="25" fill="#00ff00"/>
<rect x="320" y="158" width="1" height="25" fill="#00c800"/>
<rect x="323" y="158" width="1" height="25" fill="#00ff00"/>
<rect x="327" y="158" width="1" height="25" fill="#00c800"/>
<rect x="330" y="158" width="1" height="25" fill="#00ff00"/>
<rect x="333" y="158" width="1" height="25" fill="#00c800"/>
<rect x="337" y="158" width="1" height="25" fill="#00ff00"/>
<rect x="340" y="158" width="1" height="25" fill="#00c800"/>
<rect x="343" y="158" width="1" height="25" fill="#00ff00"/>
<rect x="347" y="158" width="1" height="25" fill="#00c800"/>
<rect x="350" y="158" width="1" height="25" fill="#00ff00"/>
<rect x="357" y="158" width="1" height="25" fill="#00c800"/>
<rect x="363" y="158" width="1" height="25" fill="#00ff00"/>
<rect x="367" y="158" width="1" height="25" fill="#00c800"/>
<rect x="370" y="158" width="1" height="25" fill="#00ff00"/>
<rect x="373" y="158" width="1" height="25" fill="#00c800"/>
<rect x="377" y="158" width="1" height="25" fill="#00ff00"/>
<rect x="380" y="158" width="1" height="25" fill="#00c800"/>
<rect x="384" y="158" width="1" height="25" fill="#00ff00"/>
<rect x="387" y="158" width="1" height="25" fill="#00c800"/>
<rect x="390" y="158" width="1" height="25" fill="#00ff00"/>
<rect x="394" y="158" width="1" height="25" fill="#00c800"/>
<rect x="397" y="158" width="1" height="25" fill="#00ff00"/>
<rect x="400" y="158" width="1" height="25" fill="#00c800"/>
<rect x="404" y="158" width="1" height="25" fill="#00ff00"/>
<rect x="407" y="158" width="1" height="25" fill="#00c800"/>
<rect x="410" y="158" width="1" height="25" fill="#00ff00"/>
<rect x="414" y="158" width="1" height="25" fill="#00c800"/>
<rect x="417" y="158" width="1" height="25" fill="#00ff00"/>
<rect x="420" y="158" width="1" height="25" fill="#00c800"/>
<rect x="424" y="158" width="1" height="25" fill="#00ff00"/>
<rect x="427" y="158" width="1" height="25" fill="#00c800"/>
<rect x="430" y="158" width="1" height="25" fill="#00ff00"/>
<rect x="437" y="158" width="1" height="25" fill="#00c800"/>
<rect x="444" y="158" width="1" height="25" fill="#00ff00"/>
<rect x="121" y="183" width="1" height="26" fill="#99eef5"/>
<rect x="125" y="183" width="1" height="26" fill="#00ccee"/>
<rect x="128" y="183" width="1" height="26" fill="#99eef5"/>
<rect x="131" y="183" width="1" height="26" fill="#00ccee"/>
<rect x="135" y="183" width="1" height="26" fill="#99eef5"/>
<rect x="138" y="183" width="1" height="26" fill="#00ccee"/>
<rect x="141" y="183" width="1" height="26" fill="#99eef5"/>
<rect x="145" y="183" width="1" height="26" fill="#00ccee"/>
<rect x="148" y="183" width="1" height="26" fill="#99eef5"/>
<rect x="151" y="183" width="1" height="26" fill="#00ccee"/>
<rect x="155" y="183" width="1" height="26" fill="#99eef5"/>
<rect x="158" y="183" width="1" height="26" fill="#00ccee"/>
<rect x="161" y="183" width="1" height="26" fill="#99eef5"/>
<rect x="165" y="183" width="1" height="26" fill="#00ccee"/>
<rect x="168" y="183" width="1" height="26" fill="#99eef5"/>
<rect x="172" y="183" width="1" height="26" fill="#00ccee"/>
<rect x="175" y="183" width="1" height="26" fill="#99eef5"/>
<rect x="178" y="183" width="1" height="26" fill="#00ccee"/>
<rect x="182" y="183" width="1" height="26" fill="#99eef5"/>
<rect x="185" y="183" width="1" height="26" fill="#00ccee"/>
<rect x="188" y="183" width="1" height="26" fill="#99eef5"/>
<rect x="192" y="183" width="1" height="26" fill="#00ccee"/>
<rect x="195" y="183" width="1" height="26" fill="#99eef5"/>
<rect x="202" y="183" width="1" height="26" fill="#00ccee"/>
<rect x="205" y="183" width="1" height="26" fill="#99eef5"/>
<rect x="208" y="183" width="1" height="26" fill="#00ccee"/>
<rect x="212" y="183" width="1" height="26" fill="#99eef5"/>
<rect x="215" y="183" width="1" height="26" fill="#00ccee"/>
<rect x="218" y="183" width="1" height="26" fill="#99eef5"/>
<rect x="222" y="183" width="1" height="26" fill="#00ccee"/>
<rect x="225" y="183" width="1" height="26" fill="#99eef5"/>
<rect x="229" y="183" width="1" height="26" fill="#00ccee"/>
<rect x="232" y="183" width="1" height="26" fill="#99eef5"/>
<rect x="235" y="183" width="1" height="26" fill="#00ccee"/>
<rect x="239" y="183" width="1" height="26" fill="#99eef5"/>
<rect x="242" y="183" width="1" height="26" fill="#00ccee"/>
<rect x="245" y="183" width="1" height="26" fill="#99eef5"/>
<rect x="249" y="183" width="1" height="26" fill="#00ccee"/>
<rect x="252" y="183" width="1" height="26" fill="#99eef5"/>
<rect x="255" y="183" width="1" height="26" fill="#00ccee"/>
<rect x="259" y="183" width="1" height="26" fill="#99eef5"/>
<rect x="262" y="183" width="1" height="26" fill="#00ccee"/>
<rect x="265" y="183" width="1" height="26" fill="#99eef5"/>
<rect x="269" y="183" width="1" height="26" fill="#00ccee"/>
<rect x="272" y="183" width="1" height="26" fill="#99eef5"/>
<rect x="275" y="183" width="1" height="26" fill="#00ccee"/>
<rect x="282" y="183" width="1" height="26" fill="#99eef5"/>
<rect x="285" y="183" width="1" height="26" fill="#00ccee"/>
<rect x="289" y="183" width="1" height="26" fill="#99eef5"/>
<rect x="292" y="183" width="1" height="26" fill="#00ccee"/>
<rect x="296" y="183" width="1" height="26" fill="#99eef5"/>
<rect x="299" y="183" width="1" height="26" fill="#00ccee"/>
<rect x="302" y="183" width="1" height="26" fill="#99eef5"/>
<rect x="306" y="183" width="1" height="26" fill="#00ccee"/>
<rect x="309" y="183" width="1" height="26" fill="#99eef5"/>
<rect x="312" y="183" width="1" height="26" fill="#00ccee"/>
<rect x="316" y="183" width="1" height="26" fill="#99eef5"/>
<rect x="319" y="183" width="1" height="26" fill="#00ccee"/>
<rect x="322" y="183" width="1" height="26" fill="#99eef5"/>
<rect x="326" y="183" width="1" height="26" fill="#00ccee"/>
<rect x="329" y="183" width="1" height="26" fill="#99eef5"/>
<rect x="332" y="183" width="1" height="26" fill="#00ccee"/>
<rect x="336" y="183" width="1" height="26" fill="#99eef5"/>
<rect x="339" y="183" width="1" height="26" fill="#00ccee"/>
<rect x="342" y="183" width="1" height="26" fill="#99eef5"/>
<rect x="346" y="183" width="1" height="26" fill="#00ccee"/>
<rect x="349" y="183" width="1" height="26" fill="#99eef5"/>
<rect x="353" y="183" width="1" height="26" fill="#00ccee"/>
<rect x="356" y="183" width="1" height="26" fill="#99eef5"/>
<rect x="363" y="183" width="1" height="26" fill="#00ccee"/>
<rect x="366" y="183" width="1" height="26" fill="#99eef5"/>
<rect x="369" y="183" width="1" height="26" fill="#00ccee"/>
<rect x="373" y="183" width="1" height="26" fill="#99eef5"/>
<rect x="376" y="183" width="1" height="26" fill="#00ccee"/>
<rect x="379" y="183" width="1" height="26" fill="#99eef5"/>
<rect x="383" y="183" width="1" height="26" fill="#00ccee"/>
<rect x="386" y="183" width="1" height="26" fill="#99eef5"/>
<rect x="389" y="183" width="1" height="26" fill="#00ccee"/>
<rect x="393" y="183" width="1" height="26" fill="#99eef5"/>
<rect x="396" y="183" width="1" height="26" fill="#00ccee"/>
<rect x="399" y="183" width="1" height="26" fill="#99eef5"/>
<rect x="403" y="183" width="1" height="26" fill="#00ccee"/>
<rect x="406" y="183" width="1" height="26" fill="#99eef5"/>
<rect x="410" y="183" width="1" height="26" fill="#00ccee"/>
<rect x="413" y="183" width="1" height="26" fill="#99eef5"/>
<rect x="416" y="183" width="1" height="26" fill="#00ccee"/>
<rect x="420" y="183" width="1" height="26" fill="#99eef5"/>
<rect x="423" y="183" width="1" height="26" fill="#00ccee"/>
<rect x="426" y="183" width="1" height="26" fill="#99eef5"/>
<rect x="430" y="183" width="1" height="26" fill="#00ccee"/>
<rect x="433" y="183" width="1" height="26" fill="#99eef5"/>
<rect x="436" y="183" width="1" height="26" fill="#00ccee"/>
<rect x="443" y="183" width="1" height="26" fill="#99eef5"/>
<rect x="116" y="209" width="2" height="25" fill="#00ff00"/>
<rect x="119" y="209" width="1" height="25" fill="#00ff00"/>
<rect x="121" y="209" width="1" height="25" fill="#00c800"/>
<rect x="123" y="209" width="2" height="25" fill="#00ff00"/>
<rect x="127" y="209" width="1" height="25" fill="#00ff00"/>
<rect x="129" y="209" width="1" height="25" fill="#00c800"/>
<rect x="131" y="209" width="1" height="25" fill="#00ff00"/>
<rect x="133" y="209" width="2" height="25" fill="#00ff00"/>
<rect x="136" y="209" width="2" height="25" fill="#00ff00"/>
<rect x="139" y="209" width="1" height="25" fill="#00ff00"/>
<rect x="141" y="209" width="1" height="25" fill="#00ff00"/>
<rect x="143" y="209" width="2" height="25" fill="#00ff00"/>
<rect x="147" y="209" width="1" height="25" fill="#00ff00"/>
<rect x="149" y="209" width="1" height="25" fill="#00c800"/>
<rect x="151" y="209" width="1" height="25" fill="#00ff00"/>
<rect x="153" y="209" width="2" height="25" fill="#00ff00"/>
<rect x="156" y="209" width="2" height="25" fill="#00ff00"/>
<rect x="159" y="209" width="1" height="25" fill="#00ff00"/>
<rect x="161" y="209" width="1" height="25" fill="#00ff00"/>
<rect x="163" y="209" width="2" height="25" fill="#00ff00"/>
<rect x="168" y="209" width="1" height="25" fill="#00ff00"/>
<rect x="170" y="209" width="2" height="25" fill="#00ff00"/>
<rect x="173" y="209" width="2" height="25" fill="#00ff00"/>
<rect x="176" y="209" width="1" height="25" fill="#00c800"/>
<rect x="178" y="209" width="1" height="25" fill="#00ff00"/>
<rect x="180" y="209" width="2" height="25" fill="#00ff00"/>
<rect x="183" y="209" width="2" height="25" fill="#00ff00"/>
<rect x="188" y="209" width="1" height="25" fill="#00ff00"/>
<rect x="190" y="209" width="2" height="25" fill="#00ff00"/>
<rect x="194" y="209" width="1" height="25" fill="#00ff00"/>
<rect x="196" y="209" width="1" height="25" fill="#00ff00"/>
<rect x="198" y="209" width="1" height="25" fill="#00ff00"/>
<rect x="201" y="209" width="1" height="25" fill="#00c800"/>
<rect x="203" y="209" width="2" height="25" fill="#00ff00"/>
<rect x="208" y="209" width="1" height="25" fill="#00ff00"/>
<rect x="210" y="209" width="2" height="25" fill="#00ff00"/>
<rect x="213" y="209" width="2" height="25" fill="#00ff00"/>
<rect x="216" y="209" width="1" height="25" fill="#00c800"/>
<rect x="218" y="209" width="1" height="25" fill="#00ff00"/>
<rect x="220" y="209" width="2" height="25" fill="#00ff00"/>
<rect x="223" y="209" width="2" height="25" fill="#00ff00"/>
<rect x="228" y="209" width="1" height="25" fill="#00ff00"/>
<rect x="230" y="209" width="1" height="25" fill="#00c800"/>
<rect x="232" y="209" width="1" height="25" fill="#00ff00"/>
<rect x="234" y="209" width="2" height="25" fill="#00ff00"/>
<rect x="237" y="209" width="2" height="25" fill="#00ff00"/>
<rect x="240" y="209" width="1" height="25" fill="#00ff00"/>
<rect x="242" y="209" width="1" height="25" fill="#00ff00"/>
<rect x="244" y="209" width="2" height="25" fill="#00ff00"/>
<rect x="248" y="209" width="1" height="25" fill="#00ff00"/>
<rect x="250" y="209" width="1" height="25" fill="#00c800"/>
<rect x="252" y="209" width="1" height="25" fill="#00ff00"/>
<rect x="254" y="209" width="2" height="25" fill="#00ff00"/>
<rect x="257" y="209" width="2" height="25" fill="#00ff00"/>
<rect x="260" y="209" width="1" height="25" fill="#00ff00"/>
<rect x="262" y="209" width="1" height="25" fill="#00ff00"/>
<rect x="264" y="209" width="2" height="25" fill="#00ff00"/>
<rect x="269" y="209" width="1" height="25" fill="#00ff00"/>
<rect x="271" y="209" width="2" height="25" fill="#00ff00"/>
<rect x="274" y="209" width="2" height="25" fill="#00ff00"/>
<rect x="277" y="209" width="1" height="25" fill="#00c800"/>
<rect x="279" y="209" width="1" height="25" fill="#00ff00"/>
<rect x="281" y="209" width="2" height="25" fill="#00ff00"/>
<rect x="284" y="209" width="2" height="25" fill="#00ff00"/>
<rect x="289" y="209" width="1" height="25" fill="#00ff00"/>
<rect x="291" y="209" width="2" height="25" fill="#00ff00"/>
<rect x="295" y="209" width="1" height="25" fill="#00ff00"/>
<rect x="297" y="209" width="1" height="25" fill="#00ff00"/>
<rect x="299" y="209" width="1" height="25" fill="#00ff00"/>
<rect x="302" y="209" width="1" height="25" fill="#00c800"/>
<rect x="304" y="209" width="2" height="25" fill="#00ff00"/>
<rect x="309" y="209" width="1" height="25" fill="#00ff00"/>
<rect x="311" y="209" width="2" height="25" fill="#00ff00"/>
<rect x="314" y="209" width="2" height="25" fill="#00ff00"/>
<rect x="317" y="209" width="1" height="25" fill="#00c800"/>
<rect x="319" y="209" width="1" height="25" fill="#00ff00"/>
<rect x="321" y="209" width="2" height="25" fill="#00ff00"/>
<rect x="324" y="209" width="2" height="25" fill="#00ff00"/>
<rect x="328" y="209" width="1" height="25" fill="#00ff00"/>
<rect x="330" y="209" width="1" height="25" fill="#00c800"/>
<rect x="332" y="209" width="1" height="25" fill="#00ff00"/>
<rect x="334" y="209" width="2" height="25" fill="#00ff00"/>
<rect x="337" y="209" width="2" height="25" fill="#00ff00"/>
<rect x="340" y="209" width="1" height="25" fill="#00ff00"/>
<rect x="342" y="209" width="1" height="25" fill="#00ff00"/>
<rect x="344" y="209" width="2" height="25" fill="#00ff00"/>
<rect x="348" y="209" width="1" height="25" fill="#00ff00"/>
<rect x="350" y="209" width="1" height="25" fill="#00c800"/>
<rect x="352" y="209" width="1" height="25" fill="#00ff00"/>
<rect x="354" y="209" width="2" height="25" fill="#00ff00"/>
<rect x="357" y="209" width="2" height="25" fill="#00ff00"/>
<rect x="360" y="209" width="1" height="25" fill="#00ff00"/>
<rect x="362" y="209" width="1" height="25" fill="#00ff00"/>
<rect x="364" y="209" width="2" height="25" fill="#00ff00"/>
<rect x="369" y="209" width="1" height="25" fill="#00ff00"/>
<rect x="371" y="209" width="2" height="25" fill="#00ff00"/>
<rect x="374" y="209" width="2" height="25" fill="#00ff00"/>
<rect x="377" y="209" width="1" height="25" fill="#00c800"/>
<rect x="379" y="209" width="1" height="25" fill="#00ff00"/>
<rect x="381" y="209" width="2" height="25" fill="#00ff00"/>
<rect x="384" y="209" width="2" height="25" fill="#00ff00"/>
<rect x="389" y="209" width="1" height="25" fill="#00ff00"/>
<rect x="391" y="209" width="2" height="25" fill="#00ff00"/>
<rect x="395" y="209" width="1" height="25" fill="#00ff00"/>
<rect x="397" y="209" width="1" height="25" fill="#00ff00"/>
<rect x="399" y="209" width="1" height="25" fill="#00ff00"/>
<rect x="402" y="209" width="1" height="25" fill="#00c800"/>
<rect x="404" y="209" width="2" height="25" fill="#00ff00"/>
<rect x="409" y="209" width="1" height="25" fill="#00ff00"/>
<rect x="412" y="209" width="1" height="25" fill="#00ff00"/>
<rect x="414" y="209" width="1" height="25" fill="#00c800"/>
<rect x="416" y="209" width="1" height="25" fill="#00ff00"/>
<rect x="418" y="209" width="2" height="25" fill="#00ff00"/>
<rect x="422" y="209" width="1" height="25" fill="#00ff00"/>
<rect x="424" y="209" width="1" height="25" fill="#00ff00"/>
<rect x="426" y="209" width="1" height="25" fill="#00ff00"/>
<rect x="429" y="209" width="1" height="25" fill="#00ff00"/>
<rect x="431" y="209" width="2" height="25" fill="#00ff00"/>
<rect x="434" y="209" width="1" height="25" fill="#00ff00"/>
<rect x="436" y="209" width="1" height="25" fill="#00c800"/>
<rect x="438" y="209" width="2" height="25" fill="#00ff00"/>
<rect x="441" y="209" width="2" height="25" fill="#00ff00"/>
<rect x="117" y="234" width="1" height="26" fill="#99eef5"/>
<rect x="120" y="234" width="1" height="26" fill="#00ccee"/>
<rect x="123" y="234" width="1" height="26" fill="#99eef5"/>
<rect x="130" y="234" width="1" height="26" fill="#00ccee"/>
<rect x="133" y="234" width="1" height="26" fill="#99eef5"/>
<rect x="137" y="234" width="1" height="26" fill="#00ccee"/>
<rect x="140" y="234" width="1" height="26" fill="#99eef5"/>
<rect x="143" y="234" width="1" height="26" fill="#00ccee"/>
<rect x="150" y="234" width="1" height="26" fill="#99eef5"/>
<rect x="153" y="234" width="1" height="26" fill="#00ccee"/>
<rect x="157" y="234" width="1" height="26" fill="#99eef5"/>
<rect x="160" y="234" width="1" height="26" fill="#00ccee"/>
<rect x="163" y="234" width="1" height="26" fill="#99eef5"/>
<rect x="170" y="234" width="1" height="26" fill="#00ccee"/>
<rect x="173" y="234" width="1" height="26" fill="#99eef5"/>
<rect x="177" y="234" width="1" height="26" fill="#00ccee"/>
<rect x="180" y="234" width="1" height="26" fill="#99eef5"/>
<rect x="184" y="234" width="1" height="26" fill="#00ccee"/>
<rect x="190" y="234" width="1" height="26" fill="#99eef5"/>
<rect x="194" y="234" width="1" height="26" fill="#00ccee"/>
<rect x="197" y="234" width="1" height="26" fill="#99eef5"/>
<rect x="200" y="234" width="1" height="26" fill="#00ccee"/>
<rect x="204" y="234" width="1" height="26" fill="#99eef5"/>
<rect x="210" y="234" width="1" height="26" fill="#00ccee"/>
<rect x="214" y="234" width="1" height="26" fill="#99eef5"/>
<rect x="217" y="234" width="1" height="26" fill="#00ccee"/>
<rect x="220" y="234" width="1" height="26" fill="#99eef5"/>
<rect x="224" y="234" width="1" height="26" fill="#00ccee"/>
<rect x="230" y="234" width="1" height="26" fill="#99eef5"/>
<rect x="234" y="234" width="1" height="26" fill="#00ccee"/>
<rect x="237" y="234" width="1" height="26" fill="#99eef5"/>
<rect x="241" y="234" width="1" height="26" fill="#00ccee"/>
<rect x="244" y="234" width="1" height="26" fill="#99eef5"/>
<rect x="251" y="234" width="1" height="26" fill="#00ccee"/>
<rect x="254" y="234" width="1" height="26" fill="#99eef5"/>
<rect x="257" y="234" width="1" height="26" fill="#00ccee"/>
<rect x="261" y="234" width="1" height="26" fill="#99eef5"/>
<rect x="264" y="234" width="1" height="26" fill="#00ccee"/>
<rect x="271" y="234" width="1" height="26" fill="#99eef5"/>
<rect x="274" y="234" width="1" height="26" fill="#00ccee"/>
<rect x="277" y="234" width="1" height="26" fill="#99eef5"/>
<rect x="281" y="234" width="1" height="26" fill="#00ccee"/>
<rect x="284" y="234" width="1" height="26" fill="#99eef5"/>
<rect x="291" y="234" width="1" height="26" fill="#00ccee"/>
<rect x="294" y="234" width="1" height="26" fill="#99eef5"/>
<rect x="298" y="234" width="1" height="26" fill="#00ccee"/>
<rect x="301" y="234" width="1" height="26" fill="#99eef5"/>
<rect x="304" y="234" width="1" height="26" fill="#00ccee"/>
<rect x="311" y="234" width="1" height="26" fill="#99eef5"/>
<rect x="314" y="234" width="1" height="26" fill="#00ccee"/>
<rect x="318" y="234" width="1" height="26" fill="#99eef5"/>
<rect x="321" y="234" width="1" height="26" fill="#00ccee"/>
<rect x="324" y="234" width="1" height="26" fill="#99eef5"/>
<rect x="331" y="234" width="1" height="26" fill="#00ccee"/>
<rect x="334" y="234" width="1" height="26" fill="#99eef5"/>
<rect x="338" y="234" width="1" height="26" fill="#00ccee"/>
<rect x="341" y="234" width="1" height="26" fill="#99eef5"/>
<rect x="344" y="234" width="1" height="26" fill="#00ccee"/>
<rect x="351" y="234" width="1" height="26" fill="#99eef5"/>
<rect x="354" y="234" width="1" height="26" fill="#00ccee"/>
<rect x="358" y="234" width="1" height="26" fill="#99eef5"/>
<rect x="361" y="234" width="1" height="26" fill="#00ccee"/>
<rect x="365" y="234" width="1" height="26" fill="#99eef5"/>
<rect x="371" y="234" width="1" height="26" fill="#00ccee"/>
<rect x="375" y="234" width="1" height="26" fill="#99eef5"/>
<rect x="378" y="234" width="1" height="26" fill="#00ccee"/>
<rect x="381" y="234" width="1" height="26" fill="#99eef5"/>
<rect x="385" y="234" width="1" height="26" fill="#00ccee"/>
<rect x="391" y="234" width="1" height="26" fill="#99eef5"/>
<rect x="395" y="234" width="1" height="26" fill="#00ccee"/>
<rect x="398" y="234" width="1" height="26" fill="#99eef5"/>
<rect x="401" y="234" width="1" height="26" fill="#00ccee"/>
<rect x="405" y="234" width="1" height="26" fill="#99eef5"/>
<rect x="411" y="234" width="1" height="26" fill="#00ccee"/>
<rect x="415" y="234" width="1" height="26" fill="#99eef5"/>
<rect x="418" y="234" width="1" height="26" fill="#00ccee"/>
<rect x="422" y="234" width="1" height="26" fill="#99eef5"/>
<rect x="425" y="234" width="1" height="26" fill="#00ccee"/>
<rect x="432" y="234" width="1" height="26" fill="#99eef5"/>
<rect x="435" y="234" width="1" height="26" fill="#00ccee"/>
<rect x="438" y="234" width="1" height="26" fill="#99eef5"/>
<rect x="442" y="234" width="1" height="26" fill="#00ccee"/>
<rect x="156" y="260" width="1" height="25" fill="#99eef5"/>
<rect x="237" y="260" width="1" height="25" fill="#00ccee"/>
<rect x="317" y="260" width="1" height="25" fill="#99eef5"/>
<rect x="398" y="260" width="1" height="25" fill="#00ccee"/>
<rect x="116" y="286" width="1" height="25" fill="#c8c800"/>
<rect x="117" y="286" width="1" height="25" fill="#ffff00"/>
<rect x="118" y="286" width="1" height="25" fill="#ffff00"/>
<rect x="120" y="286" width="1" height="25" fill="#c8c800"/>
<rect x="121" y="286" width="1" height="25" fill="#ffff00"/>
<rect x="122" y="286" width="1" height="25" fill="#ffff00"/>
<rect x="123" y="286" width="1" height="25" fill="#c8c800"/>
<rect x="124" y="286" width="1" height="25" fill="#ffff00"/>
<rect x="125" y="286" width="1" height="25" fill="#ffff00"/>
<rect x="127" y="286" width="1" height="25" fill="#ffff00"/>
<rect x="128" y="286" width="1" height="25" fill="#ffff00"/>
<rect x="129" y="286" width="1" height="25" fill="#ffff00"/>
<rect x="130" y="286" width="1" height="25" fill="#c8c800"/>
<rect x="131" y="286" width="1" height="25" fill="#ffff00"/>
<rect x="132" y="286" width="1" height="25" fill="#ffff00"/>
<rect x="133" y="286" width="1" height="25" fill="#c8c800"/>
<rect x="134" y="286" width="1" height="25" fill="#ffff00"/>
<rect x="135" y="286" width="1" height="25" fill="#ffff00"/>
<rect x="136" y="286" width="1" height="25" fill="#c8c800"/>
<rect x="137" y="286" width="1" height="25" fill="#c8c800"/>
<rect x="138" y="286" width="1" height="25" fill="#ffff00"/>
<rect x="139" y="286" width="1" height="25" fill="#ffff00"/>
<rect x="140" y="286" width="1" height="25" fill="#c8c800"/>
<rect x="141" y="286" width="1" height="25" fill="#ffff00"/>
<rect x="142" y="286" width="1" height="25" fill="#ffff00"/>
<rect x="143" y="286" width="1" height="25" fill="#c8c800"/>
<rect x="144" y="286" width="1" height="25" fill="#ffff00"/>
<rect x="145" y="286" width="1" height="25" fill="#ffff00"/>
<rect x="147" y="286" width="1" height="25" fill="#c8c800"/>
<rect x="148" y="286" width="1" height="25" fill="#ffff00"/>
<rect x="149" y="286" width="1" height="25" fill="#ffff00"/>
<rect x="150" y="286" width="1" height="25" fill="#c8c800"/>
<rect x="151" y="286" width="1" height="25" fill="#ffff00"/>
<rect x="152" y="286" width="1" height="25" fill="#ffff00"/>
<rect x="153" y="286" width="1" height="25" fill="#c8c800"/>
<rect x="154" y="286" width="1" height="25" fill="#ffff00"/>
<rect x="155" y="286" width="1" height="25" fill="#ffff00"/>
<rect x="156" y="286" width="1" height="25" fill="#c8c800"/>
<rect x="157" y="286" width="1" height="25" fill="#c8c800"/>
<rect x="158" y="286" width="1" height="25" fill="#ffff00"/>
<rect x="159" y="286" width="1" height="25" fill="#ffff00"/>
<rect x="160" y="286" width="1" height="25" fill="#c8c800"/>
<rect x="161" y="286" width="1" height="25" fill="#ffff00"/>
<rect x="162" y="286" width="1" height="25" fill="#ffff00"/>
<rect x="163" y="286" width="1" height="25" fill="#c8c800"/>
<rect x="164" y="286" width="1" height="25" fill="#ffff00"/>
<rect x="165" y="286" width="1" height="25" fill="#ffff00"/>
<rect x="167" y="286" width="1" height="25" fill="#c8c800"/>
<rect x="168" y="286" width="1" height="25" fill="#ffff00"/>
<rect x="169" y="286" width="1" height="25" fill="#ffff00"/>
<rect x="170" y="286" width="1" height="25" fill="#c8c800"/>
<rect x="171" y="286" width="1" height="25" fill="#ffff00"/>
<rect x="172" y="286" width="1" height="25" fill="#ffff00"/>
<rect x="173" y="286" width="1" height="25" fill="#c8c800"/>
<rect x="174" y="286" width="1" height="25" fill="#ffff00"/>
<rect x="175" y="286" width="1" height="25" fill="#ffff00"/>
<rect x="176" y="286" width="1" height="25" fill="#c8c800"/>
<rect x="177" y="286" width="1" height="25" fill="#c8c800"/>
<rect x="178" y="286" width="1" height="25" fill="#ffff00"/>
<rect x="179" y="286" width="1" height="25" fill="#ffff00"/>
<rect x="180" y="286" width="1" height="25" fill="#c8c800"/>
<rect x="181" y="286" width="1" height="25" fill="#ffff00"/>
<rect x="182" y="286" width="1" height="25" fill="#ffff00"/>
<rect x="183" y="286" width="1" height="25" fill="#c8c800"/>
<rect x="184" y="286" width="1" height="25" fill="#ffff00"/>
<rect x="185" y="286" width="1" height="25" fill="#ffff00"/>
<rect x="187" y="286" width="1" height="25" fill="#c8c800"/>
<rect x="188" y="286" width="1" height="25" fill="#ffff00"/>
<rect x="189" y="286" width="1" height="25" fill="#ffff00"/>
<rect x="190" y="286" width="1" height="25" fill="#c8c800"/>
<rect x="191" y="286" width="1" height="25" fill="#ffff00"/>
<rect x="192" y="286" width="1" height="25" fill="#ffff00"/>
<rect x="193" y="286" width="1" height="25" fill="#c8c800"/>
<rect x="194" y="286" width="1" height="25" fill="#c8c800"/>
<rect x="195" y="286" width="1" height="25" fill="#ffff00"/>
<rect x="196" y="286" width="1" height="25" fill="#ffff00"/>
<rect x="197" y="286" width="1" height="25" fill="#c8c800"/>
<rect x="198" y="286" width="1" height="25" fill="#ffff00"/>
<rect x="200" y="286" width="1" height="25" fill="#c8c800"/>
<rect x="201" y="286" width="1" height="25" fill="#ffff00"/>
<rect x="202" y="286" width="1" height="25" fill="#ffff00"/>
<rect x="203" y="286" width="1" height="25" fill="#c8c800"/>
<rect x="204" y="286" width="1" height="25" fill="#c8c800"/>
<rect x="205" y="286" width="1" height="25" fill="#ffff00"/>
<rect x="207" y="286" width="1" height="25" fill="#c8c800"/>
<rect x="208" y="286" width="1" height="25" fill="#ffff00"/>
<rect x="209" y="286" width="1" height="25" fill="#ffff00"/>
<rect x="210" y="286" width="1" height="25" fill="#c8c800"/>
<rect x="211" y="286" width="1" height="25" fill="#ffff00"/>
<rect x="212" y="286" width="1" height="25" fill="#ffff00"/>
<rect x="213" y="286" width="1" height="25" fill="#c8c800"/>
<rect x="214" y="286" width="1" height="25" fill="#c8c800"/>
<rect x="215" y="286" width="1" height="25" fill="#ffff00"/>
<rect x="216" y="286" width="1" height="25" fill="#ffff00"/>
<rect x="217" y="286" width="1" height="25" fill="#c8c800"/>
<rect x="218" y="286" width="1" height="25" fill="#ffff00"/>
<rect x="219" y="286" width="1" height="25" fill="#ffff00"/>
<rect x="220" y="286" width="1" height="25" fill="#c8c800"/>
<rect x="221" y="286" width="1" height="25" fill="#ffff00"/>
<rect x="222" y="286" width="1" height="25" fill="#ffff00"/>
<rect x="223" y="286" width="1" height="25" fill="#c8c800"/>
<rect x="224" y="286" width="1" height="25" fill="#c8c800"/>
<rect x="225" y="286" width="1" height="25" fill="#ffff00"/>
<rect x="226" y="286" width="1" height="25" fill="#ffff00"/>
<rect x="228" y="286" width="1" height="25" fill="#ffff00"/>
<rect x="229" y="286" width="1" height="25" fill="#ffff00"/>
<rect x="230" y="286" width="1" height="25" fill="#c8c800"/>
<rect x="231" y="286" width="1" height="25" fill="#ffff00"/>
<rect x="232" y="286" width="1" height="25" fill="#ffff00"/>
<rect x="233" y="286" width="1" height="25" fill="#c8c800"/>
<rect x="234" y="286" width="1" height="25" fill="#c8c800"/>
<rect x="235" y="286" width="1" height="25" fill="#ffff00"/>
<rect x="236" y="286" width="1" height="25" fill="#ffff00"/>
<rect x="237" y="286" width="1" height="25" fill="#c8c800"/>
<rect x="238" y="286" width="1" height="25" fill="#ffff00"/>
<rect x="239" y="286" width="1" height="25" fill="#ffff00"/>
<rect x="240" y="286" width="1" height="25" fill="#c8c800"/>
<rect x="241" y="286" width="1" height="25" fill="#ffff00"/>
<rect x="242" y="286" width="1" height="25" fill="#ffff00"/>
<rect x="243" y="286" width="1" height="25" fill="#c8c800"/>
<rect x="244" y="286" width="1" height="25" fill="#c8c800"/>
<rect x="245" y="286" width="1" height="25" fill="#ffff00"/>
<rect x="246" y="286" width="1" height="25" fill="#ffff00"/>
<rect x="248" y="286" width="1" height="25" fill="#ffff00"/>
<rect x="249" y="286" width="1" height="25" fill="#ffff00"/>
<rect x="250" y="286" width="1" height="25" fill="#c8c800"/>
<rect x="251" y="286" width="1" height="25" fill="#c8c800"/>
<rect x="252" y="286" width="1" height="25" fill="#ffff00"/>
<rect x="253" y="286" width="1" height="25" fill="#ffff00"/>
<rect x="254" y="286" width="1" height="25" fill="#c8c800"/>
<rect x="255" y="286" width="1" height="25" fill="#ffff00"/>
<rect x="256" y="286" width="1" height="25" fill="#ffff00"/>
<rect x="257" y="286" width="1" height="25" fill="#c8c800"/>
<rect x="258" y="286" width="1" height="25" fill="#ffff00"/>
<rect x="259" y="286" width="1" height="25" fill="#ffff00"/>
<rect x="260" y="286" width="1" height="25" fill="#c8c800"/>
<rect x="261" y="286" width="1" height="25" fill="#c8c800"/>
<rect x="262" y="286" width="1" height="25" fill="#ffff00"/>
<rect x="263" y="286" width="1" height="25" fill="#ffff00"/>
<rect x="264" y="286" width="1" height="25" fill="#c8c800"/>
<rect x="265" y="286" width="1" height="25" fill="#ffff00"/>
<rect x="266" y="286" width="1" height="25" fill="#ffff00"/>
<rect x="268" y="286" width="1" height="25" fill="#ffff00"/>
<rect x="269" y="286" width="1" height="25" fill="#ffff00"/>
<rect x="270" y="286" width="1" height="25" fill="#c8c800"/>
<rect x="271" y="286" width="1" height="25" fill="#c8c800"/>
<rect x="272" y="286" width="1" height="25" fill="#ffff00"/>
<rect x="274" y="286" width="1" height="25" fill="#c8c800"/>
<rect x="275" y="286" width="1" height="25" fill="#ffff00"/>
<rect x="276" y="286" width="1" height="25" fill="#ffff00"/>
<rect x="277" y="286" width="1" height="25" fill="#c8c800"/>
<rect x="278" y="286" width="1" height="25" fill="#ffff00"/>
<rect x="280" y="286" width="1" height="25" fill="#c8c800"/>
<rect x="281" y="286" width="1" height="25" fill="#c8c800"/>
<rect x="282" y="286" width="1" height="25" fill="#ffff00"/>
<rect x="283" y="286" width="1" height="25" fill="#ffff00"/>
<rect x="284" y="286" width="1" height="25" fill="#c8c800"/>
<rect x="285" y="286" width="1" height="25" fill="#ffff00"/>
<rect x="286" y="286" width="1" height="25" fill="#ffff00"/>
<rect x="288" y="286" width="1" height="25" fill="#ffff00"/>
<rect x="289" y="286" width="1" height="25" fill="#ffff00"/>
<rect x="290" y="286" width="1" height="25" fill="#c8c800"/>
<rect x="291" y="286" width="1" height="25" fill="#c8c800"/>
<rect x="292" y="286" width="1" height="25" fill="#ffff00"/>
<rect x="293" y="286" width="1" height="25" fill="#ffff00"/>
<rect x="294" y="286" width="1" height="25" fill="#c8c800"/>
<rect x="295" y="286" width="1" height="25" fill="#ffff00"/>
<rect x="296" y="286" width="1" height="25" fill="#ffff00"/>
<rect x="297" y="286" width="1" height="25" fill="#c8c800"/>
<rect x="298" y="286" width="1" height="25" fill="#ffff00"/>
<rect x="299" y="286" width="1" height="25" fill="#ffff00"/>
<rect x="300" y="286" width="1" height="25" fill="#c8c800"/>
<rect x="301" y="286" width="1" height="25" fill="#c8c800"/>
<rect x="302" y="286" width="1" height="25" fill="#ffff00"/>
<rect x="303" y="286" width="1" height="25" fill="#ffff00"/>
<rect x="304" y="286" width="1" height="25" fill="#c8c800"/>
<rect x="305" y="286" width="1" height="25" fill="#ffff00"/>
<rect x="306" y="286" width="1" height="25" fill="#ffff00"/>
<rect x="308" y="286" width="1" height="25" fill="#c8c800"/>
<rect x="309" y="286" width="1" height="25" fill="#ffff00"/>
<rect x="310" y="286" width="1" height="25" fill="#ffff00"/>
<rect x="311" y="286" width="1" height="25" fill="#c8c800"/>
<rect x="312" y="286" width="1" height="25" fill="#ffff00"/>
<rect x="313" y="286" width="1" height="25" fill="#ffff00"/>
<rect x="314" y="286" width="1" height="25" fill="#c8c800"/>
<rect x="315" y="286" width="1" height="25" fill="#ffff00"/>
<rect x="316" y="286" width="1" height="25" fill="#ffff00"/>
<rect x="317" y="286" width="1" height="25" fill="#c8c800"/>
<rect x="318" y="286" width="1" height="25" fill="#c8c800"/>
<rect x="319" y="286" width="1" height="25" fill="#ffff00"/>
<rect x="320" y="286" width="1" height="25" fill="#ffff00"/>
<rect x="321" y="286" width="1" height="25" fill="#c8c800"/>
<rect x="322" y="286" width="1" height="25" fill="#ffff00"/>
<rect x="323" y="286" width="1" height="25" fill="#ffff00"/>
<rect x="324" y="286" width="1" height="25" fill="#c8c800"/>
<rect x="325" y="286" width="1" height="25" fill="#ffff00"/>
<rect x="326" y="286" width="1" height="25" fill="#ffff00"/>
<rect x="328" y="286" width="1" height="25" fill="#c8c800"/>
<rect x="329" y="286" width="1" height="25" fill="#ffff00"/>
<rect x="330" y="286" width="1" height="25" fill="#ffff00"/>
<rect x="331" y="286" width="1" height="25" fill="#c8c800"/>
<rect x="332" y="286" width="1" height="25" fill="#ffff00"/>
<rect x="333" y="286" width="1" height="25" fill="#ffff00"/>
<rect x="334" y="286" width="1" height="25" fill="#c8c800"/>
<rect x="335" y="286" width="1" height="25" fill="#ffff00"/>
<rect x="336" y="286" width="1" height="25" fill="#ffff00"/>
<rect x="337" y="286" width="1" height="25" fill="#c8c800"/>
<rect x="338" y="286" width="1" height="25" fill="#c8c800"/>
<rect x="339" y="286" width="1" height="25" fill="#ffff00"/>
<rect x="340" y="286" width="1" height="25" fill="#ffff00"/>
<rect x="341" y="286" width="1" height="25" fill="#c8c800"/>
<rect x="342" y="286" width="1" height="25" fill="#ffff00"/>
<rect x="343" y="286" width="1" height="25" fill="#ffff00"/>
<rect x="344" y="286" width="1" height="25" fill="#c8c800"/>
<rect x="345" y="286" width="1" height="25" fill="#ffff00"/>
<rect x="346" y="286" width="1" height="25" fill="#ffff00"/>
<rect x="348" y="286" width="1" height="25" fill="#c8c800"/>
<rect x="349" y="286" width="1" height="25" fill="#ffff00"/>
<rect x="350" y="286" width="1" height="25" fill="#ffff00"/>
<rect x="351" y="286" width="1" height="25" fill="#c8c800"/>
<rect x="352" y="286" width="1" height="25" fill="#ffff00"/>
<rect x="353" y="286" width="1" height="25" fill="#ffff00"/>
<rect x="354" y="286" width="1" height="25" fill="#c8c800"/>
<rect x="355" y="286" width="1" height="25" fill="#ffff00"/>
<rect x="356" y="286" width="1" height="25" fill="#ffff00"/>
<rect x="357" y="286" width="1" height="25" fill="#c8c800"/>
<rect x="358" y="286" width="1" height="25" fill="#c8c800"/>
<rect x="359" y="286" width="1" height="25" fill="#ffff00"/>
<rect x="361" y="286" width="1" height="25" fill="#c8c800"/>
<rect x="362" y="286" width="1" height="25" fill="#ffff00"/>
<rect x="363" y="286" width="1" height="25" fill="#ffff00"/>
<rect x="364" y="286" width="1" height="25" fill="#c8c800"/>
<rect x="365" y="286" width="1" height="25" fill="#ffff00"/>
<rect x="366" y="286" width="1" height="25" fill="#ffff00"/>
<rect x="368" y="286" width="1" height="25" fill="#c8c800"/>
<rect x="369" y="286" width="1" height="25" fill="#ffff00"/>
<rect x="370" y="286" width="1" height="25" fill="#ffff00"/>
<rect x="371" y="286" width="1" height="25" fill="#c8c800"/>
<rect x="372" y="286" width="1" height="25" fill="#ffff00"/>
<rect x="373" y="286" width="1" height="25" fill="#ffff00"/>
<rect x="374" y="286" width="1" height="25" fill="#c8c800"/>
<rect x="375" y="286" width="1" height="25" fill="#c8c800"/>
<rect x="376" y="286" width="1" height="25" fill="#ffff00"/>
<rect x="377" y="286" width="1" height="25" fill="#ffff00"/>
<rect x="378" y="286" width="1" height="25" fill="#c8c800"/>
<rect x="379" y="286" width="1" height="25" fill="#ffff00"/>
<rect x="380" y="286" width="1" height="25" fill="#ffff00"/>
<rect x="381" y="286" width="1" height="25" fill="#c8c800"/>
<rect x="382" y="286" width="1" height="25" fill="#ffff00"/>
<rect x="383" y="286" width="1" height="25" fill="#ffff00"/>
<rect x="384" y="286" width="1" height="25" fill="#c8c800"/>
<rect x="385" y="286" width="1" height="25" fill="#c8c800"/>
<rect x="386" y="286" width="1" height="25" fill="#ffff00"/>
<rect x="388" y="286" width="1" height="25" fill="#c8c800"/>
<rect x="389" y="286" width="1" height="25" fill="#ffff00"/>
<rect x="390" y="286" width="1" height="25" fill="#ffff00"/>
<rect x="391" y="286" width="1" height="25" fill="#c8c800"/>
<rect x="392" y="286" width="1" height="25" fill="#ffff00"/>
<rect x="393" y="286" width="1" height="25" fill="#ffff00"/>
<rect x="394" y="286" width="1" height="25" fill="#c8c800"/>
<rect x="395" y="286" width="1" height="25" fill="#c8c800"/>
<rect x="396" y="286" width="1" height="25" fill="#ffff00"/>
<rect x="397" y="286" width="1" height="25" fill="#ffff00"/>
<rect x="398" y="286" width="1" height="25" fill="#c8c800"/>
<rect x="399" y="286" width="1" height="25" fill="#ffff00"/>
<rect x="400" y="286" width="1" height="25" fill="#ffff00"/>
<rect x="401" y="286" width="1" height="25" fill="#c8c800"/>
<rect x="402" y="286" width="1" height="25" fill="#ffff00"/>
<rect x="403" y="286" width="1" height="25" fill="#ffff00"/>
<rect x="404" y="286" width="1" height="25" fill="#c8c800"/>
<rect x="405" y="286" width="1" height="25" fill="#c8c800"/>
<rect x="406" y="286" width="1" height="25" fill="#ffff00"/>
<rect x="407" y="286" width="1" height="25" fill="#ffff00"/>
<rect x="409" y="286" width="1" height="25" fill="#ffff00"/>
<rect x="410" y="286" width="1" height="25" fill="#ffff00"/>
<rect x="411" y="286" width="1" height="25" fill="#c8c800"/>
<rect x="412" y="286" width="1" height="25" fill="#ffff00"/>
<rect x="413" y="286" width="1" height="25" fill="#ffff00"/>
<rect x="414" y="286" width="1" height="25" fill="#c8c800"/>
<rect x="415" y="286" width="1" height="25" fill="#c8c800"/>
<rect x="416" y="286" width="1" height="25" fill="#ffff00"/>
<rect x="417" y="286" width="1" height="25" fill="#ffff00"/>
<rect x="418" y="286" width="1" height="25" fill="#c8c800"/>
<rect x="419" y="286" width="1" height="25" fill="#ffff00"/>
<rect x="420" y="286" width="1" height="25" fill="#ffff00"/>
<rect x="421" y="286" width="1" height="25" fill="#c8c800"/>
<rect x="422" y="286" width="1" height="25" fill="#ffff00"/>
<rect x="423" y="286" width="1" height="25" fill="#ffff00"/>
<rect x="424" y="286" width="1" height="25" fill="#c8c800"/>
<rect x="425" y="286" width="1" height="25" fill="#c8c800"/>
<rect x="426" y="286" width="1" height="25" fill="#ffff00"/>
<rect x="427" y="286" width="1" height="25" fill="#ffff00"/>
<rect x="429" y="286" width="1" height="25" fill="#ffff00"/>
<rect x="430" y="286" width="1" height="25" fill="#ffff00"/>
<rect x="431" y="286" width="1" height="25" fill="#c8c800"/>
<rect x="432" y="286" width="1" height="25" fill="#c8c800"/>
<rect x="433" y="286" width="1" height="25" fill="#ffff00"/>
<rect x="435" y="286" width="1" height="25" fill="#c8c800"/>
<rect x="436" y="286" width="1" height="25" fill="#ffff00"/>
<rect x="437" y="286" width="1" height="25" fill="#ffff00"/>
<rect x="438" y="286" width="1" height="25" fill="#c8c800"/>
<rect x="439" y="286" width="1" height="25" fill="#ffff00"/>
<rect x="441" y="286" width="1" height="25" fill="#c8c800"/>
<rect x="442" y="286" width="1" height="25" fill="#c8c800"/>
<rect x="443" y="286" width="1" height="25" fill="#ffff00"/>
<rect x="118" y="311" width="1" height="25" fill="#99eef5"/>
<rect x="198" y="311" width="2" height="25" fill="#00ccee"/>
<rect x="279" y="311" width="1" height="25" fill="#99eef5"/>
<rect x="359" y="311" width="2" height="25" fill="#00ccee"/>
<rect x="440" y="311" width="1" height="25" fill="#99eef5"/>
<rect x="192" y="336" width="1" height="26" fill="#00ff00"/>
<rect x="353" y="336" width="1" height="26" fill="#00c800"/>
<rect x="198" y="362" width="1" height="26" fill="#99eef5"/>
<rect x="359" y="362" width="1" height="26" fill="#00ccee"/>
<rect x="126" y="388" width="1" height="25" fill="#ffff00"/>
<rect x="146" y="388" width="1" height="25" fill="#c8c800"/>
<rect x="166" y="388" width="1" height="25" fill="#ffff00"/>
<rect x="186" y="388" width="1" height="25" fill="#c8c800"/>
<rect x="206" y="388" width="1" height="25" fill="#ffff00"/>
<rect x="226" y="388" width="2" height="25" fill="#c8c800"/>
<rect x="246" y="388" width="2" height="25" fill="#ffff00"/>
<rect x="266" y="388" width="2" height="25" fill="#c8c800"/>
<rect x="287" y="388" width="1" height="25" fill="#ffff00"/>
<rect x="307" y="388" width="1" height="25" fill="#c8c800"/>
<rect x="327" y="388" width="1" height="25" fill="#ffff00"/>
<rect x="347" y="388" width="1" height="25" fill="#c8c800"/>
<rect x="367" y="388" width="1" height="25" fill="#ffff00"/>
<rect x="387" y="388" width="2" height="25" fill="#c8c800"/>
<rect x="407" y="388" width="2" height="25" fill="#ffff00"/>
<rect x="427" y="388" width="2" height="25" fill="#c8c800"/>
<rect x="108" y="478" width="9" height="6" fill="#fff"/>
<rect x="117" y="483" width="555" height="1" fill="#ff0000"/>
<rect x="117" y="480" width="329" height="3" fill="#fff"/>
<rect x="117" y="477" width="1" height="3" fill="#fff"/>
<rect x="120" y="477" width="1" height="3" fill="#fff"/>
<rect x="124" y="478" width="1" height="2" fill="#fff"/>
<rect x="127" y="475" width="1" height="5" fill="#fff"/>
<rect x="128" y="480" width="2" height="1" fill="#000"/>
<rect x="130" y="477" width="1" height="3" fill="#fff"/>
<rect x="131" y="480" width="2" height="1" fill="#000"/>
<rect x="134" y="477" width="1" height="3" fill="#fff"/>
<rect x="135" y="480" width="2" height="1" fill="#000"/>
<rect x="137" y="478" width="1" height="2" fill="#fff"/>
<rect x="140" y="478" width="1" height="2" fill="#fff"/>
<rect x="141" y="480" width="2" height="1" fill="#000"/>
<rect x="144" y="477" width="1" height="3" fill="#fff"/>
<rect x="147" y="475" width="1" height="5" fill="#fff"/>
<rect x="150" y="478" width="1" height="2" fill="#fff"/>
<rect x="154" y="476" width="1" height="4" fill="#fff"/>
<rect x="157" y="478" width="1" height="2" fill="#fff"/>
<rect x="160" y="477" width="1" height="3" fill="#fff"/>
<rect x="161" y="480" width="2" height="1" fill="#000"/>
<rect x="164" y="477" width="1" height="3" fill="#fff"/>
<rect x="165" y="480" width="2" height="1" fill="#000"/>
<rect x="167" y="475" width="1" height="5" fill="#fff"/>
<rect x="170" y="477" width="1" height="3" fill="#fff"/>
<rect x="174" y="477" width="1" height="3" fill="#fff"/>
<rect x="175" y="480" width="2" height="1" fill="#000"/>
<rect x="177" y="477" width="1" height="3" fill="#fff"/>
<rect x="180" y="476" width="1" height="4" fill="#fff"/>
<rect x="181" y="480" width="2" height="1" fill="#000"/>
<rect x="184" y="477" width="1" height="3" fill="#fff"/>
<rect x="187" y="475" width="1" height="5" fill="#fff"/>
<rect x="188" y="480" width="2" height="1" fill="#000"/>
<rect x="191" y="478" width="1" height="2" fill="#fff"/>
<rect x="194" y="478" width="1" height="2" fill="#fff"/>
<rect x="197" y="477" width="1" height="3" fill="#fff"/>
<rect x="198" y="480" width="2" height="1" fill="#000"/>
<rect x="201" y="476" width="1" height="4" fill="#fff"/>
<rect x="204" y="477" width="1" height="3" fill="#fff"/>
<rect x="207" y="475" width="1" height="5" fill="#fff"/>
<rect x="211" y="477" width="1" height="3" fill="#fff"/>
<rect x="212" y="479" width="1" height="1" fill="#fff"/>
<rect x="214" y="477" width="1" height="3" fill="#fff"/>
<rect x="217" y="477" width="1" height="3" fill="#fff"/>
<rect x="218" y="480" width="2" height="1" fill="#000"/>
<rect x="221" y="477" width="1" height="3" fill="#fff"/>
<rect x="224" y="477" width="1" height="3" fill="#fff"/>
<rect x="227" y="475" width="1" height="5" fill="#fff"/>
<rect x="228" y="479" width="1" height="1" fill="#fff"/>
<rect x="231" y="478" width="1" height="2" fill="#fff"/>
<rect x="232" y="480" width="2" height="1" fill="#000"/>
<rect x="234" y="477" width="1" height="3" fill="#fff"/>
<rect x="235" y="480" width="2" height="1" fill="#000"/>
<rect x="237" y="477" width="1" height="3" fill="#fff"/>
<rect x="238" y="480" width="2" height="1" fill="#000"/>
<rect x="241" y="477" width="1" height="3" fill="#fff"/>
<rect x="244" y="476" width="1" height="4" fill="#fff"/>
<rect x="245" y="480" width="2" height="1" fill="#000"/>
<rect x="248" y="475" width="1" height="5" fill="#fff"/>
<rect x="251" y="477" width="1" height="3" fill="#fff"/>
<rect x="252" y="479" width="1" height="1" fill="#fff"/>
<rect x="254" y="477" width="1" height="3" fill="#fff"/>
<rect x="258" y="477" width="1" height="3" fill="#fff"/>
<rect x="261" y="478" width="1" height="2" fill="#fff"/>
<rect x="264" y="477" width="1" height="3" fill="#fff"/>
<rect x="268" y="475" width="1" height="5" fill="#fff"/>
<rect x="271" y="478" width="1" height="2" fill="#fff"/>
<rect x="274" y="477" width="1" height="3" fill="#fff"/>
<rect x="278" y="476" width="1" height="4" fill="#fff"/>
<rect x="281" y="477" width="1" height="3" fill="#fff"/>
<rect x="284" y="476" width="1" height="4" fill="#fff"/>
<rect x="285" y="479" width="1" height="1" fill="#fff"/>
<rect x="288" y="475" width="1" height="5" fill="#fff"/>
<rect x="291" y="477" width="1" height="3" fill="#fff"/>
<rect x="292" y="480" width="2" height="1" fill="#000"/>
<rect x="294" y="478" width="1" height="2" fill="#fff"/>
<rect x="298" y="477" width="1" height="3" fill="#fff"/>
<rect x="301" y="477" width="1" height="3" fill="#fff"/>
<rect x="305" y="477" width="1" height="3" fill="#fff"/>
<rect x="306" y="479" width="1" height="1" fill="#fff"/>
<rect x="308" y="475" width="1" height="5" fill="#fff"/>
<rect x="311" y="478" width="1" height="2" fill="#fff"/>
<rect x="312" y="480" width="2" height="1" fill="#000"/>
<rect x="315" y="477" width="1" height="3" fill="#fff"/>
<rect x="318" y="477" width="1" height="3" fill="#fff"/>
<rect x="321" y="477" width="1" height="3" fill="#fff"/>
<rect x="322" y="479" width="1" height="1" fill="#fff"/>
<rect x="325" y="477" width="1" height="3" fill="#fff"/>
<rect x="328" y="475" width="1" height="5" fill="#fff"/>
<rect x="331" y="477" width="1" height="3" fill="#fff"/>
<rect x="335" y="477" width="1" height="3" fill="#fff"/>
<rect x="336" y="480" width="2" height="1" fill="#000"/>
<rect x="338" y="477" width="1" height="3" fill="#fff"/>
<rect x="339" y="480" width="2" height="1" fill="#000"/>
<rect x="341" y="477" width="1" height="3" fill="#fff"/>
<rect x="342" y="480" width="2" height="1" fill="#000"/>
<rect x="345" y="477" width="1" height="3" fill="#fff"/>
<rect x="346" y="480" width="2" height="1" fill="#000"/>
<rect x="348" y="475" width="1" height="5" fill="#fff"/>
<rect x="349" y="479" width="1" height="1" fill="#fff"/>
<rect x="351" y="477" width="1" height="3" fill="#fff"/>
<rect x="355" y="477" width="1" height="3" fill="#fff"/>
<rect x="358" y="477" width="1" height="3" fill="#fff"/>
<rect x="361" y="476" width="1" height="4" fill="#fff"/>
<rect x="365" y="477" width="1" height="3" fill="#fff"/>
<rect x="368" y="475" width="1" height="5" fill="#fff"/>
<rect x="372" y="477" width="1" height="3" fill="#fff"/>
<rect x="375" y="476" width="1" height="4" fill="#fff"/>
<rect x="378" y="477" width="1" height="3" fill="#fff"/>
<rect x="379" y="479" width="1" height="1" fill="#fff"/>
<rect x="382" y="477" width="1" height="3" fill="#fff"/>
<rect x="383" y="480" width="2" height="1" fill="#000"/>
<rect x="385" y="476" width="1" height="4" fill="#fff"/>
<rect x="388" y="475" width="1" height="5" fill="#fff"/>
<rect x="389" y="480" width="2" height="1" fill="#000"/>
<rect x="392" y="477" width="1" height="3" fill="#fff"/>
<rect x="395" y="478" width="1" height="2" fill="#fff"/>
<rect x="396" y="479" width="1" height="1" fill="#fff"/>
<rect x="398" y="478" width="1" height="2" fill="#fff"/>
<rect x="399" y="480" width="2" height="1" fill="#000"/>
<rect x="402" y="477" width="1" height="3" fill="#fff"/>
<rect x="403" y="480" width="2" height="1" fill="#000"/>
<rect x="405" y="478" width="1" height="2" fill="#fff"/>
<rect x="408" y="475" width="1" height="5" fill="#fff"/>
<rect x="412" y="478" width="1" height="2" fill="#fff"/>
<rect x="415" y="477" width="1" height="3" fill="#fff"/>
<rect x="416" y="479" width="1" height="1" fill="#fff"/>
<rect x="418" y="476" width="1" height="4" fill="#fff"/>
<rect x="419" y="479" width="1" height="1" fill="#fff"/>
<rect x="422" y="477" width="1" height="3" fill="#fff"/>
<rect x="425" y="477" width="1" height="3" fill="#fff"/>
<rect x="426" y="480" width="2" height="1" fill="#000"/>
<rect x="429" y="475" width="1" height="5" fill="#fff"/>
<rect x="432" y="477" width="1" height="3" fill="#fff"/>
<rect x="435" y="477" width="1" height="3" fill="#fff"/>
<rect x="436" y="480" width="2" height="1" fill="#000"/>
<rect x="439" y="478" width="1" height="2" fill="#fff"/>
<rect x="442" y="476" width="1" height="4" fill="#fff"/>
<rect x="443" y="479" width="1" height="1" fill="#fff"/>
<rect x="445" y="476" width="1" height="4" fill="#fff"/>
<rect x="446" y="480" width="2" height="1" fill="#000"/>
<rect x="126" y="483" width="1" height="1" fill="#fff"/>
<rect x="146" y="483" width="1" height="1" fill="#fff"/>
<rect x="166" y="483" width="1" height="1" fill="#fff"/>
<rect x="186" y="483" width="1" height="1" fill="#fff"/>
<rect x="206" y="483" width="1" height="1" fill="#fff"/>
<rect x="226" y="483" width="1" height="1" fill="#fff"/>
<rect x="246" y="483" width="1" height="1" fill="#fff"/>
<rect x="266" y="483" width="1" height="1" fill="#fff"/>
<rect x="287" y="483" width="1" height="1" fill="#fff"/>
<rect x="307" y="483" width="1" height="1" fill="#fff"/>
<rect x="327" y="483" width="1" height="1" fill="#fff"/>
<rect x="347" y="483" width="1" height="1" fill="#fff"/>
<rect x="367" y="483" width="1" height="1" fill="#fff"/>
<rect x="387" y="483" width="1" height="1" fill="#fff"/>
<rect x="407" y="483" width="1" height="1" fill="#fff"/>
<rect x="427" y="483" width="1" height="1" fill="#fff"/>
<rect x="108" y="19" width="1" height="465" fill="#fff"/>
<rect x="671" y="19" width="1" height="464" fill="#fff"/>
<rect x="108" y="19" width="564" height="1" fill="#fff"/>
<rect x="109" y="20" width="1" height="5" fill="#fff"/>
<rect x="142" y="20" width="1" height="5" fill="#fff"/>
<rect x="176" y="20" width="1" height="5" fill="#fff"/>
<rect x="209" y="20" width="1" height="10" fill="#fff"/>
<rect x="243" y="20" width="1" height="5" fill="#fff"/>
<rect x="276" y="20" width="1" height="5" fill="#fff"/>
<rect x="310" y="20" width="1" height="5" fill="#fff"/>
<rect x="344" y="20" width="1" height="5" fill="#fff"/>
<rect x="377" y="20" width="1" height="10" fill="#fff"/>
<rect x="411" y="20" width="1" height="5" fill="#fff"/>
<rect x="444" y="20" width="1" height="5" fill="#fff"/>
<rect x="478" y="20" width="1" height="5" fill="#fff"/>
<rect x="478" y="479" width="1" height="4" fill="#fff"/>
<rect x="511" y="20" width="1" height="5" fill="#fff"/>
<rect x="511" y="479" width="1" height="4" fill="#fff"/>
<rect x="545" y="20" width="1" height="10" fill="#fff"/>
<rect x="545" y="473" width="1" height="10" fill="#fff"/>
<rect x="578" y="20" width="1" height="5" fill="#fff"/>
<rect x="578" y="479" width="1" height="4" fill="#fff"/>
<rect x="612" y="20" width="1" height="5" fill="#fff"/>
<rect x="612" y="479" width="1" height="4" fill="#fff"/>
<rect x="645" y="20" width="1" height="5" fill="#fff"/>
<rect x="645" y="479" width="1" height="4" fill="#fff"/>
<defs><filter id="idf" x="0" y="0" width="700" height="532" filterUnits="userSpaceOnUse" color-interpolation-filters="sRGB"><feOffset dx="0" dy="0"/></filter></defs>
<g id="txt" filter="url(#idf)">
<text x="193.0" y="15" font-size="12.5" text-anchor="start" fill="#fff" textLength="33" lengthAdjust="spacingAndGlyphs">02:00</text>
<text x="193.0" y="503" font-size="12.5" text-anchor="start" fill="#fff" textLength="33" lengthAdjust="spacingAndGlyphs">02:00</text>
<text x="361.0" y="15" font-size="12.5" text-anchor="start" fill="#fff" textLength="33" lengthAdjust="spacingAndGlyphs">04:00</text>
<text x="361.0" y="503" font-size="12.5" text-anchor="start" fill="#fff" textLength="33" lengthAdjust="spacingAndGlyphs">04:00</text>
<text x="528.2" y="15" font-size="12.5" text-anchor="start" fill="#fff" textLength="33" lengthAdjust="spacingAndGlyphs">06:00</text>
<text x="528.2" y="503" font-size="12.5" text-anchor="start" fill="#fff" textLength="33" lengthAdjust="spacingAndGlyphs">06:00</text>
<text x="17.3" y="62" font-size="12.5" text-anchor="start" fill="#fff" textLength="77.5" lengthAdjust="spacingAndGlyphs">TM SUBMODE</text>
<text x="7.7" y="109" font-size="12.5" text-anchor="start" fill="#fff" textLength="93.5" lengthAdjust="spacingAndGlyphs">LASCO/EIT (OP)</text>
<text x="49.3" y="150" font-size="12.5" text-anchor="start" fill="#fff" textLength="51.5" lengthAdjust="spacingAndGlyphs">OS<tspan dy="-2.5">_</tspan><tspan dy="2.5">3342</tspan></text>
<text x="49.3" y="176" font-size="12.5" text-anchor="start" fill="#fff" textLength="51.5" lengthAdjust="spacingAndGlyphs">OS<tspan dy="-2.5">_</tspan><tspan dy="2.5">3361</tspan></text>
<text x="49.3" y="201" font-size="12.5" text-anchor="start" fill="#fff" textLength="51.5" lengthAdjust="spacingAndGlyphs">OS<tspan dy="-2.5">_</tspan><tspan dy="2.5">3387</tspan></text>
<text x="49.3" y="226" font-size="12.5" text-anchor="start" fill="#fff" textLength="51.5" lengthAdjust="spacingAndGlyphs">OS<tspan dy="-2.5">_</tspan><tspan dy="2.5">3389</tspan></text>
<text x="49.3" y="252" font-size="12.5" text-anchor="start" fill="#fff" textLength="51.5" lengthAdjust="spacingAndGlyphs">OS<tspan dy="-2.5">_</tspan><tspan dy="2.5">3390</tspan></text>
<text x="49.3" y="278" font-size="12.5" text-anchor="start" fill="#fff" textLength="51.5" lengthAdjust="spacingAndGlyphs">OS<tspan dy="-2.5">_</tspan><tspan dy="2.5">3405</tspan></text>
<text x="49.3" y="303" font-size="12.5" text-anchor="start" fill="#fff" textLength="51.5" lengthAdjust="spacingAndGlyphs">OS<tspan dy="-2.5">_</tspan><tspan dy="2.5">3406</tspan></text>
<text x="49.3" y="328" font-size="12.5" text-anchor="start" fill="#fff" textLength="51.5" lengthAdjust="spacingAndGlyphs">OS<tspan dy="-2.5">_</tspan><tspan dy="2.5">3532</tspan></text>
<text x="49.3" y="354" font-size="12.5" text-anchor="start" fill="#fff" textLength="51.5" lengthAdjust="spacingAndGlyphs">OS<tspan dy="-2.5">_</tspan><tspan dy="2.5">3568</tspan></text>
<text x="49.3" y="380" font-size="12.5" text-anchor="start" fill="#fff" textLength="51.5" lengthAdjust="spacingAndGlyphs">OS<tspan dy="-2.5">_</tspan><tspan dy="2.5">3570</tspan></text>
<text x="49.3" y="406" font-size="12.5" text-anchor="start" fill="#fff" textLength="51.5" lengthAdjust="spacingAndGlyphs">OS<tspan dy="-2.5">_</tspan><tspan dy="2.5">3654</tspan></text>
<text x="100.8" y="39" font-size="12.5" text-anchor="start" fill="#fff" textLength="6" lengthAdjust="spacingAndGlyphs">5</text>
<text x="100.8" y="48" font-size="12.5" text-anchor="start" fill="#fff" textLength="6" lengthAdjust="spacingAndGlyphs">4</text>
<text x="100.8" y="57" font-size="12.5" text-anchor="start" fill="#fff" textLength="6" lengthAdjust="spacingAndGlyphs">3</text>
<text x="100.8" y="66" font-size="12.5" text-anchor="start" fill="#fff" textLength="6" lengthAdjust="spacingAndGlyphs">2</text>
<text x="100.8" y="76" font-size="12.5" text-anchor="start" fill="#fff" textLength="6" lengthAdjust="spacingAndGlyphs">1</text>
<text x="87.4" y="432" font-size="12.5" text-anchor="start" fill="#fff" textLength="19.7" lengthAdjust="spacingAndGlyphs">100</text>
<text x="93.1" y="444" font-size="12.5" text-anchor="start" fill="#fff" textLength="13.6" lengthAdjust="spacingAndGlyphs">80</text>
<text x="93.1" y="477" font-size="12.5" text-anchor="start" fill="#fff" textLength="13.6" lengthAdjust="spacingAndGlyphs">20</text>
<text x="101" y="488" font-size="12.5" text-anchor="start" fill="#fff" textLength="6" lengthAdjust="spacingAndGlyphs">0</text>
<text x="7.7" y="453" font-size="12.5" text-anchor="start" fill="#fff" textLength="81.8" lengthAdjust="spacingAndGlyphs">LASCO-buffer</text>
<text y="518" font-size="12.5" fill="#fff"><tspan x="307.7" textLength="76.6" lengthAdjust="spacingAndGlyphs">2003/12/22</tspan> <tspan x="393.1" textLength="77.1" lengthAdjust="spacingAndGlyphs">19:36:00.000</tspan></text>
<text x="13.9" y="520" font-size="9.8" text-anchor="start" fill="#ff0000" textLength="10.4" lengthAdjust="spacingAndGlyphs" stroke="#ff0000" stroke-width="0.4">C1</text>
<text x="35" y="520" font-size="9.8" text-anchor="start" fill="#00ff00" textLength="12.1" lengthAdjust="spacingAndGlyphs" stroke="#00ff00" stroke-width="0.4">C2</text>
<text x="56" y="520" font-size="9.8" text-anchor="start" fill="#96e6f0" textLength="11.9" lengthAdjust="spacingAndGlyphs" stroke="#96e6f0" stroke-width="0.4">C3</text>
<text x="76.7" y="520" font-size="9.8" text-anchor="start" fill="#ffff00" textLength="13.3" lengthAdjust="spacingAndGlyphs" stroke="#ffff00" stroke-width="0.4">EIT</text>
</g>
</svg>
</body></html>
